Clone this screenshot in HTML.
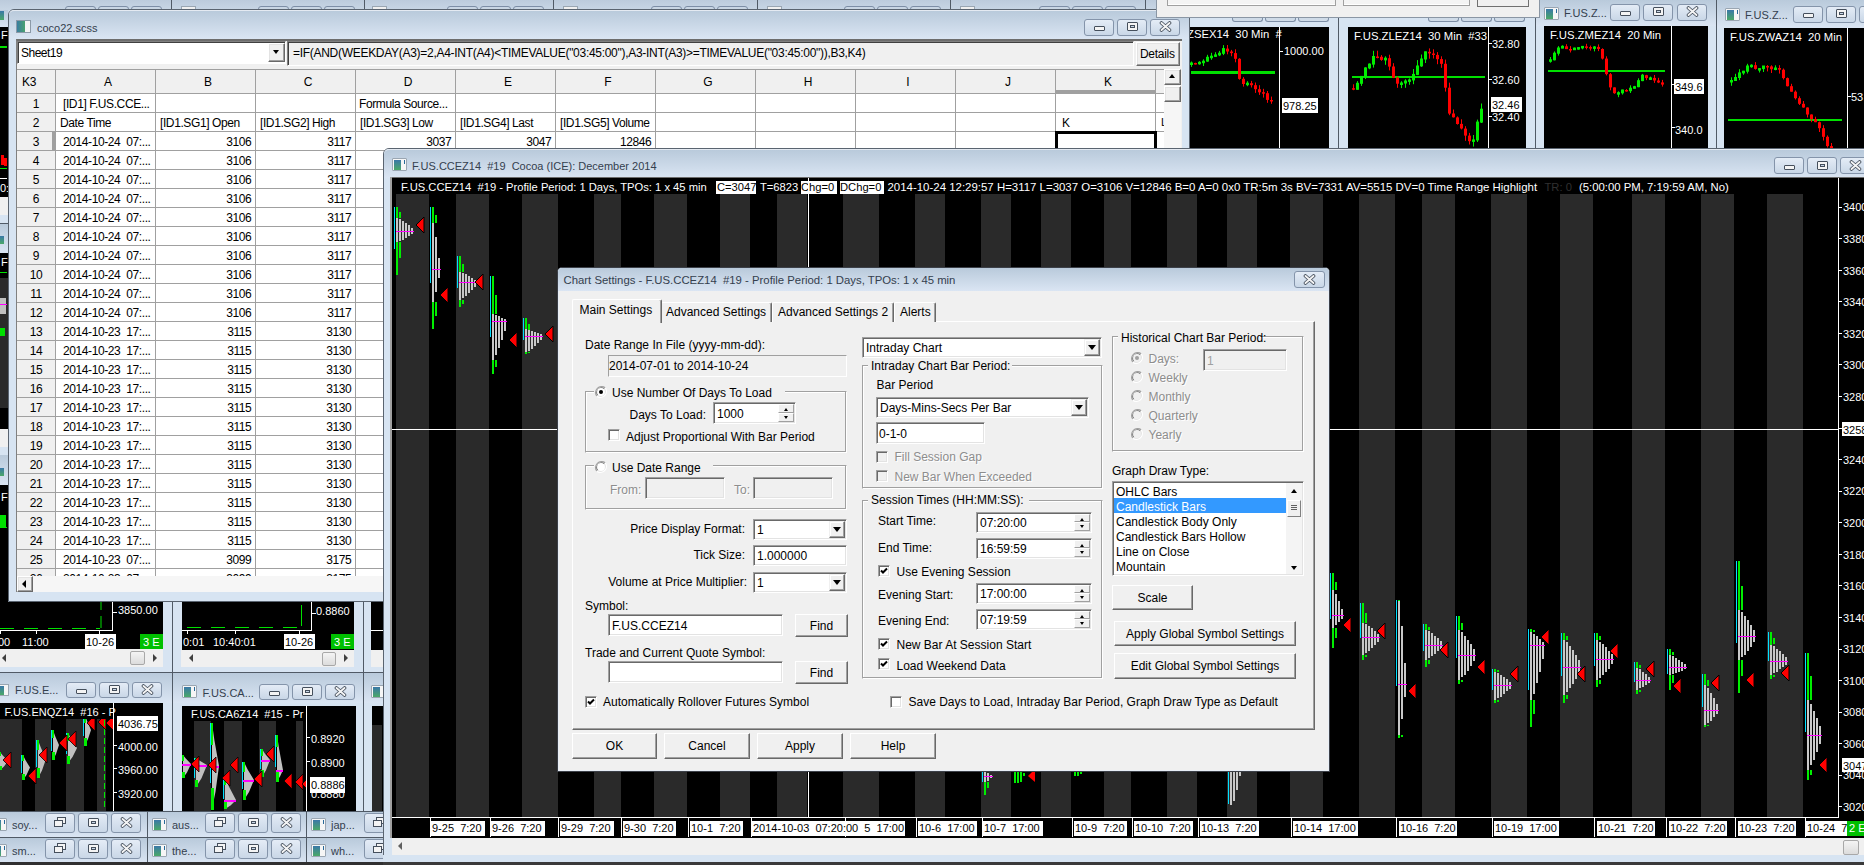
<!DOCTYPE html><html><head><meta charset="utf-8"><style>
*{margin:0;padding:0;box-sizing:border-box}
html,body{width:1864px;height:865px;overflow:hidden;background:#c9d7e6;font-family:"Liberation Sans",sans-serif;font-size:12px;color:#000}
.a{position:absolute}
.t{white-space:pre;line-height:14px}
.tb{background:linear-gradient(#b9cadb,#dae5f3)}
.fr{background:#d7e4f2}
</style></head><body>
<div class="a " style="left:0px;top:0px;width:1864px;height:10px;background:linear-gradient(#bccbdc,#c8d6e5)"></div>
<div class="a " style="left:171px;top:0px;width:1px;height:10px;background:#505a66"></div>
<div class="a " style="left:364px;top:0px;width:1px;height:10px;background:#505a66"></div>
<div class="a " style="left:553px;top:0px;width:1px;height:10px;background:#505a66"></div>
<div class="a " style="left:757px;top:0px;width:1px;height:10px;background:#505a66"></div>
<div class="a " style="left:950px;top:0px;width:1px;height:10px;background:#505a66"></div>
<div class="a " style="left:1145px;top:0px;width:1px;height:10px;background:#505a66"></div>
<div class="a " style="left:181px;top:6px;width:15px;height:4px;background:#f0f0f0;border:1px solid #9aa6b2;border-bottom:none"></div>
<div class="a " style="left:372px;top:6px;width:15px;height:4px;background:#f0f0f0;border:1px solid #9aa6b2;border-bottom:none"></div>
<div class="a " style="left:563px;top:6px;width:15px;height:4px;background:#f0f0f0;border:1px solid #9aa6b2;border-bottom:none"></div>
<div class="a " style="left:767px;top:6px;width:15px;height:4px;background:#f0f0f0;border:1px solid #9aa6b2;border-bottom:none"></div>
<div class="a " style="left:960px;top:6px;width:15px;height:4px;background:#f0f0f0;border:1px solid #9aa6b2;border-bottom:none"></div>
<div class="a " style="left:65px;top:6px;width:31px;height:6px;border:1px solid #7d8ea6;border-radius:3px;background:#c9d6e4"></div>
<div class="a " style="left:98px;top:6px;width:31px;height:6px;border:1px solid #7d8ea6;border-radius:3px;background:#c9d6e4"></div>
<div class="a " style="left:131px;top:6px;width:31px;height:6px;border:1px solid #7d8ea6;border-radius:3px;background:#c9d6e4"></div>
<div class="a " style="left:258px;top:6px;width:31px;height:6px;border:1px solid #7d8ea6;border-radius:3px;background:#c9d6e4"></div>
<div class="a " style="left:291px;top:6px;width:31px;height:6px;border:1px solid #7d8ea6;border-radius:3px;background:#c9d6e4"></div>
<div class="a " style="left:324px;top:6px;width:31px;height:6px;border:1px solid #7d8ea6;border-radius:3px;background:#c9d6e4"></div>
<div class="a " style="left:447px;top:6px;width:31px;height:6px;border:1px solid #7d8ea6;border-radius:3px;background:#c9d6e4"></div>
<div class="a " style="left:480px;top:6px;width:31px;height:6px;border:1px solid #7d8ea6;border-radius:3px;background:#c9d6e4"></div>
<div class="a " style="left:513px;top:6px;width:31px;height:6px;border:1px solid #7d8ea6;border-radius:3px;background:#c9d6e4"></div>
<div class="a " style="left:651px;top:6px;width:31px;height:6px;border:1px solid #7d8ea6;border-radius:3px;background:#c9d6e4"></div>
<div class="a " style="left:684px;top:6px;width:31px;height:6px;border:1px solid #7d8ea6;border-radius:3px;background:#c9d6e4"></div>
<div class="a " style="left:717px;top:6px;width:31px;height:6px;border:1px solid #7d8ea6;border-radius:3px;background:#c9d6e4"></div>
<div class="a " style="left:844px;top:6px;width:31px;height:6px;border:1px solid #7d8ea6;border-radius:3px;background:#c9d6e4"></div>
<div class="a " style="left:877px;top:6px;width:31px;height:6px;border:1px solid #7d8ea6;border-radius:3px;background:#c9d6e4"></div>
<div class="a " style="left:910px;top:6px;width:31px;height:6px;border:1px solid #7d8ea6;border-radius:3px;background:#c9d6e4"></div>
<div class="a " style="left:1039px;top:6px;width:31px;height:6px;border:1px solid #7d8ea6;border-radius:3px;background:#c9d6e4"></div>
<div class="a " style="left:1072px;top:6px;width:31px;height:6px;border:1px solid #7d8ea6;border-radius:3px;background:#c9d6e4"></div>
<div class="a " style="left:1105px;top:6px;width:31px;height:6px;border:1px solid #7d8ea6;border-radius:3px;background:#c9d6e4"></div>
<div class="a " style="left:0px;top:10px;width:8px;height:600px;background:#d7e4f2"></div>
<div class="a " style="left:0px;top:10px;width:8px;height:17px;background:linear-gradient(#b9cadb,#dae5f3)"></div>
<div class="a " style="left:0px;top:11px;width:4px;height:9px;background:linear-gradient(#3a78a8,#4aa868)"></div>
<div class="a " style="left:0px;top:27px;width:8px;height:170px;background:#000"></div>
<div class="a t" style="left:1px;top:28.19px;font-size:11px;color:#fff">F</div>
<div class="a " style="left:0px;top:46px;width:7px;height:2px;background:#00e000"></div>
<div class="a " style="left:1px;top:155px;width:3px;height:10px;background:#f00"></div>
<div class="a " style="left:4px;top:158px;width:3px;height:8px;background:#f00"></div>
<div class="a " style="left:0px;top:168px;width:7px;height:1px;background:#00e000"></div>
<div class="a " style="left:0px;top:178px;width:7px;height:1px;background:#fff"></div>
<div class="a t" style="left:0px;top:181.19px;font-size:11px;color:#fff">0:</div>
<div class="a " style="left:0px;top:197px;width:8px;height:18px;background:#f0f0f0"></div>
<div class="a " style="left:0px;top:215px;width:8px;height:8px;background:#d7e4f2"></div>
<div class="a " style="left:0px;top:223px;width:8px;height:1px;background:#505a66"></div>
<div class="a " style="left:0px;top:224px;width:8px;height:29px;background:linear-gradient(#b9cadb,#dae5f3)"></div>
<div class="a " style="left:0px;top:236px;width:4px;height:8px;background:linear-gradient(#3a78a8,#4aa868)"></div>
<div class="a " style="left:0px;top:253px;width:8px;height:176px;background:#000"></div>
<div class="a t" style="left:1px;top:255.19px;font-size:11px;color:#fff">F</div>
<div class="a " style="left:0px;top:272px;width:7px;height:1px;background:#00e000"></div>
<div class="a " style="left:0px;top:278px;width:8px;height:130px;background:#2a2a2a"></div>
<div class="a " style="left:0px;top:298px;width:6px;height:16px;background:#c0c0c0"></div>
<div class="a " style="left:0px;top:304px;width:7px;height:1px;background:#ff00ff"></div>
<div class="a " style="left:0px;top:328px;width:5px;height:8px;background:#00e000"></div>
<div class="a " style="left:0px;top:429px;width:8px;height:18px;background:#f0f0f0"></div>
<div class="a " style="left:0px;top:447px;width:8px;height:8px;background:#d7e4f2"></div>
<div class="a " style="left:0px;top:455px;width:8px;height:30px;background:linear-gradient(#b9cadb,#dae5f3)"></div>
<div class="a " style="left:0px;top:468px;width:4px;height:8px;background:linear-gradient(#3a78a8,#4aa868)"></div>
<div class="a " style="left:0px;top:485px;width:8px;height:125px;background:#000"></div>
<div class="a t" style="left:1px;top:490.19px;font-size:11px;color:#fff">F</div>
<div class="a " style="left:0px;top:515px;width:6px;height:12px;background:#00e000"></div>
<div class="a " style="left:0px;top:527px;width:7px;height:1px;background:#00e000"></div>
<div class="a " style="left:0px;top:602px;width:383px;height:263px;background:#d7e4f2"></div>
<div class="a " style="left:0px;top:602px;width:163px;height:47px;background:#000"></div>
<div class="a t" style="left:118px;top:603.19px;font-size:11px;color:#fff">3850.00</div>
<div class="a " style="left:112px;top:602px;width:1px;height:29px;background:#fff"></div>
<div class="a " style="left:0px;top:630px;width:113px;height:1px;background:#fff"></div>
<div class="a " style="left:113px;top:612px;width:4px;height:1px;background:#fff"></div>
<div class="a " style="left:0px;top:631px;width:1px;height:3px;background:#fff"></div>
<div class="a " style="left:36px;top:631px;width:1px;height:3px;background:#fff"></div>
<div class="a " style="left:99px;top:631px;width:1px;height:3px;background:#fff"></div>
<svg class="a" style="left:0;top:602px" width="110" height="30"><path d="M0 26.5H100" stroke="#00e000" stroke-width="1" stroke-dasharray="14 10"/><path d="M101 26V0" stroke="#00e000" stroke-width="1" stroke-dasharray="12 6"/></svg>
<div class="a t" style="left:-2px;top:634.69px;font-size:11px;color:#fff">00</div>
<div class="a t" style="left:22px;top:634.69px;font-size:11px;color:#fff">11:00</div>
<div class="a " style="left:85px;top:634px;width:31px;height:15px;background:#fff"></div>
<div class="a t" style="left:86px;top:634.69px;font-size:11px;">10-26</div>
<div class="a " style="left:140px;top:634px;width:23px;height:15px;background:#00c000"></div>
<div class="a t" style="left:143px;top:634.69px;font-size:11px;color:#fff">3 E</div>
<div class="a " style="left:0px;top:649px;width:163px;height:18px;background:#f0f0f0"></div>
<div class="a" style="left:2px;top:654px;width:0;height:0;border-top:4px solid transparent;border-bottom:4px solid transparent;border-right:4px solid #404040"></div>
<div class="a" style="left:153px;top:654px;width:0;height:0;border-top:4px solid transparent;border-bottom:4px solid transparent;border-left:4px solid #404040"></div>
<div class="a " style="left:130px;top:651px;width:15px;height:14px;background:linear-gradient(#f4f4f4,#dcdcdc);border:1px solid #a8a8a8;border-radius:2px"></div>
<div class="a " style="left:172px;top:602px;width:1px;height:263px;background:#505a66"></div>
<div class="a " style="left:182px;top:602px;width:172px;height:48px;background:#000"></div>
<div class="a " style="left:311px;top:602px;width:1px;height:29px;background:#fff"></div>
<div class="a " style="left:182px;top:630px;width:130px;height:1px;background:#fff"></div>
<div class="a " style="left:312px;top:613px;width:4px;height:1px;background:#fff"></div>
<div class="a t" style="left:316px;top:603.89px;font-size:11px;color:#fff">0.8860</div>
<svg class="a" style="left:182px;top:602px" width="130" height="30"><path d="M5 25.5H120" stroke="#00e000" stroke-width="1" stroke-dasharray="14 10"/><path d="M119.5 24V3" stroke="#00e000" stroke-width="1"/></svg>
<div class="a " style="left:187px;top:631px;width:1px;height:3px;background:#fff"></div>
<div class="a " style="left:235px;top:631px;width:1px;height:3px;background:#fff"></div>
<div class="a " style="left:299px;top:631px;width:1px;height:3px;background:#fff"></div>
<div class="a t" style="left:183px;top:634.79px;font-size:11px;color:#fff">0:01</div>
<div class="a t" style="left:213px;top:634.79px;font-size:11px;color:#fff">10:40:01</div>
<div class="a " style="left:284px;top:634px;width:31px;height:15px;background:#fff"></div>
<div class="a t" style="left:285px;top:634.79px;font-size:11px;">10-26</div>
<div class="a " style="left:331px;top:634px;width:23px;height:15px;background:#00c000"></div>
<div class="a t" style="left:334px;top:634.79px;font-size:11px;color:#fff">3 E</div>
<div class="a " style="left:181px;top:650px;width:173px;height:17px;background:#f0f0f0"></div>
<div class="a" style="left:189px;top:654px;width:0;height:0;border-top:4px solid transparent;border-bottom:4px solid transparent;border-right:4px solid #404040"></div>
<div class="a" style="left:344px;top:654px;width:0;height:0;border-top:4px solid transparent;border-bottom:4px solid transparent;border-left:4px solid #404040"></div>
<div class="a " style="left:322px;top:652px;width:14px;height:14px;background:linear-gradient(#f4f4f4,#dcdcdc);border:1px solid #a8a8a8;border-radius:2px"></div>
<div class="a " style="left:363px;top:602px;width:1px;height:263px;background:#505a66"></div>
<div class="a " style="left:371px;top:602px;width:12px;height:48px;background:#000"></div>
<div class="a " style="left:371px;top:630px;width:12px;height:1px;background:#fff"></div>
<div class="a " style="left:371px;top:650px;width:12px;height:17px;background:#f0f0f0"></div>
<div class="a " style="left:0px;top:672px;width:383px;height:1px;background:#505a66"></div>
<div class="a " style="left:0px;top:673px;width:172px;height:30px;background:linear-gradient(#b9cadb,#dae5f3)"></div>
<div class="a " style="left:0px;top:684px;width:9px;height:12px;background:#f6f6f6;border:1px solid #9aa6b2;border-left:none"><div class="a" style="left:0;top:1px;width:4px;height:9px;background:linear-gradient(#3a78a8,#4aa868)"></div></div>
<div class="a t" style="left:15px;top:683.19px;font-size:11px;color:#34404e">F.US.E...</div>
<div class="a " style="left:66px;top:682px;width:30px;height:16px;border:1px solid #8494aa;border-radius:3px;background:linear-gradient(#e4ecf6,#c9d7e7)"></div><div class="a " style="left:99px;top:682px;width:30px;height:16px;border:1px solid #8494aa;border-radius:3px;background:linear-gradient(#e4ecf6,#c9d7e7)"></div><div class="a " style="left:132px;top:682px;width:30px;height:16px;border:1px solid #8494aa;border-radius:3px;background:linear-gradient(#e4ecf6,#c9d7e7)"></div>
<div class="a " style="left:76px;top:689px;width:11px;height:5px;background:#f4f4f4;border:1px solid #454f5c;border-radius:1px"></div><div class="a " style="left:109px;top:685px;width:11px;height:9px;border:1px solid #454f5c;background:#f4f4f4;border-radius:1px"><div class="a" style="left:2px;top:2px;width:5px;height:3px;border:1px solid #454f5c;background:#c9d7e7"></div></div><svg class="a" style="left:141px;top:684px" width="13" height="11"><path d="M2.5 2L10.5 9M10.5 2L2.5 9" stroke="#454f5c" stroke-width="3.6" stroke-linecap="round"/><path d="M2.5 2L10.5 9M10.5 2L2.5 9" stroke="#f4f4f4" stroke-width="1.9" stroke-linecap="round"/></svg>
<div class="a " style="left:0px;top:703px;width:163px;height:108px;background:#000"></div>
<div class="a " style="left:0px;top:719px;width:22px;height:92px;background:#2a2a2a"></div>
<div class="a " style="left:35px;top:719px;width:16px;height:92px;background:#2a2a2a"></div>
<div class="a " style="left:66px;top:719px;width:18px;height:92px;background:#2a2a2a"></div>
<div class="a " style="left:97px;top:719px;width:9px;height:92px;background:#2a2a2a"></div>
<div class="a t" style="left:4.5px;top:704.69px;font-size:11px;color:#fff">F.US.ENQZ14  #16 - P</div>
<div class="a " style="left:113px;top:703px;width:1px;height:108px;background:#fff"></div>
<div class="a " style="left:117px;top:716px;width:41px;height:15px;background:#fff"></div>
<div class="a t" style="left:118px;top:717.19px;font-size:11px;">4036.75</div>
<div class="a " style="left:113px;top:745px;width:4px;height:1px;background:#fff"></div>
<div class="a t" style="left:118px;top:740.19px;font-size:11px;color:#fff">4000.00</div>
<div class="a " style="left:113px;top:768px;width:4px;height:1px;background:#fff"></div>
<div class="a t" style="left:118px;top:763.19px;font-size:11px;color:#fff">3960.00</div>
<div class="a " style="left:113px;top:792px;width:4px;height:1px;background:#fff"></div>
<div class="a t" style="left:118px;top:787.19px;font-size:11px;color:#fff">3920.00</div>
<div class="a " style="left:173px;top:673px;width:190px;height:30px;background:linear-gradient(#b9cadb,#dae5f3)"></div>
<div class="a " style="left:182px;top:685px;width:15px;height:13px;background:#f6f6f6;border:1px solid #9aa6b2;border-radius:1px"><div class="a" style="left:1px;top:1px;width:7px;height:10px;background:linear-gradient(#3a78a8,#4aa868)"></div><div class="a" style="left:11px;top:1px;width:1px;height:4px;background:#2a6a9a"></div></div>
<div class="a t" style="left:202.5px;top:686.19px;font-size:11px;color:#34404e">F.US.CA...</div>
<div class="a " style="left:259px;top:684px;width:30px;height:16px;border:1px solid #8494aa;border-radius:3px;background:linear-gradient(#e4ecf6,#c9d7e7)"></div><div class="a " style="left:292px;top:684px;width:30px;height:16px;border:1px solid #8494aa;border-radius:3px;background:linear-gradient(#e4ecf6,#c9d7e7)"></div><div class="a " style="left:325px;top:684px;width:30px;height:16px;border:1px solid #8494aa;border-radius:3px;background:linear-gradient(#e4ecf6,#c9d7e7)"></div>
<div class="a " style="left:269px;top:691px;width:11px;height:5px;background:#f4f4f4;border:1px solid #454f5c;border-radius:1px"></div><div class="a " style="left:302px;top:687px;width:11px;height:9px;border:1px solid #454f5c;background:#f4f4f4;border-radius:1px"><div class="a" style="left:2px;top:2px;width:5px;height:3px;border:1px solid #454f5c;background:#c9d7e7"></div></div><svg class="a" style="left:334px;top:686px" width="13" height="11"><path d="M2.5 2L10.5 9M10.5 2L2.5 9" stroke="#454f5c" stroke-width="3.6" stroke-linecap="round"/><path d="M2.5 2L10.5 9M10.5 2L2.5 9" stroke="#f4f4f4" stroke-width="1.9" stroke-linecap="round"/></svg>
<div class="a " style="left:182px;top:706px;width:174px;height:105px;background:#000"></div>
<div class="a " style="left:194px;top:721px;width:17px;height:90px;background:#2a2a2a"></div>
<div class="a " style="left:224px;top:721px;width:18px;height:90px;background:#2a2a2a"></div>
<div class="a " style="left:259px;top:721px;width:17px;height:90px;background:#2a2a2a"></div>
<div class="a " style="left:296px;top:721px;width:7px;height:90px;background:#2a2a2a"></div>
<div class="a t" style="left:191px;top:706.79px;font-size:11px;color:#fff">F.US.CA6Z14  #15 - Pr</div>
<div class="a " style="left:182px;top:706px;width:124px;height:16px;overflow:hidden"></div>
<div class="a " style="left:306px;top:706px;width:1px;height:105px;background:#fff"></div>
<div class="a " style="left:306px;top:737px;width:4px;height:1px;background:#fff"></div>
<div class="a t" style="left:311px;top:732.19px;font-size:11px;color:#fff">0.8920</div>
<div class="a " style="left:306px;top:760.6px;width:4px;height:1px;background:#fff"></div>
<div class="a t" style="left:311px;top:755.79px;font-size:11px;color:#fff">0.8900</div>
<div class="a t" style="left:311px;top:787.19px;font-size:11px;color:#fff">0.8880</div>
<div class="a " style="left:310px;top:777px;width:35px;height:16px;background:#fff"></div>
<div class="a t" style="left:311px;top:778.19px;font-size:11px;">0.8886</div>
<div class="a " style="left:364px;top:673px;width:19px;height:30px;background:linear-gradient(#b9cadb,#dae5f3)"></div>
<div class="a " style="left:371px;top:685px;width:15px;height:13px;background:#f6f6f6;border:1px solid #9aa6b2;border-radius:1px"><div class="a" style="left:1px;top:1px;width:7px;height:10px;background:linear-gradient(#3a78a8,#4aa868)"></div><div class="a" style="left:11px;top:1px;width:1px;height:4px;background:#2a6a9a"></div></div>
<div class="a " style="left:372px;top:706px;width:11px;height:105px;background:#000"></div>
<div class="a " style="left:372px;top:725px;width:10px;height:86px;background:#2a2a2a"></div>
<div class="a " style="left:-12px;top:811px;width:160px;height:26px;background:linear-gradient(#b9cadb,#dae5f3);border-top:1px solid #505a66;border-right:1px solid #505a66"></div><div class="a " style="left:-8px;top:818px;width:15px;height:13px;background:#f6f6f6;border:1px solid #9aa6b2;border-radius:1px"><div class="a" style="left:1px;top:1px;width:7px;height:10px;background:linear-gradient(#3a78a8,#4aa868)"></div><div class="a" style="left:11px;top:1px;width:1px;height:4px;background:#2a6a9a"></div></div><div class="a t" style="left:12px;top:817.69px;font-size:11px;color:#34404e">soy...</div><div class="a " style="left:45px;top:813px;width:30px;height:20px;border:1px solid #8494aa;border-radius:3px;background:linear-gradient(#e4ecf6,#c9d7e7)"></div><div class="a " style="left:78px;top:813px;width:30px;height:20px;border:1px solid #8494aa;border-radius:3px;background:linear-gradient(#e4ecf6,#c9d7e7)"></div><div class="a " style="left:111px;top:813px;width:30px;height:20px;border:1px solid #8494aa;border-radius:3px;background:linear-gradient(#e4ecf6,#c9d7e7)"></div><div class="a " style="left:54px;top:820px;width:9px;height:7px;border:1px solid #454f5c;background:#f4f4f4"></div><div class="a " style="left:57px;top:817px;width:9px;height:7px;border:1px solid #454f5c;background:#f4f4f4"></div><div class="a " style="left:54px;top:820px;width:9px;height:7px;border:1px solid #454f5c;background:#f4f4f4"></div><div class="a " style="left:88px;top:818px;width:11px;height:9px;border:1px solid #454f5c;background:#f4f4f4;border-radius:1px"><div class="a" style="left:2px;top:2px;width:5px;height:3px;border:1px solid #454f5c;background:#c9d7e7"></div></div><svg class="a" style="left:120px;top:817px" width="13" height="11"><path d="M2.5 2L10.5 9M10.5 2L2.5 9" stroke="#454f5c" stroke-width="3.6" stroke-linecap="round"/><path d="M2.5 2L10.5 9M10.5 2L2.5 9" stroke="#f4f4f4" stroke-width="1.9" stroke-linecap="round"/></svg>
<div class="a " style="left:148px;top:811px;width:159px;height:26px;background:linear-gradient(#b9cadb,#dae5f3);border-top:1px solid #505a66;border-right:1px solid #505a66"></div><div class="a " style="left:152px;top:818px;width:15px;height:13px;background:#f6f6f6;border:1px solid #9aa6b2;border-radius:1px"><div class="a" style="left:1px;top:1px;width:7px;height:10px;background:linear-gradient(#3a78a8,#4aa868)"></div><div class="a" style="left:11px;top:1px;width:1px;height:4px;background:#2a6a9a"></div></div><div class="a t" style="left:172px;top:817.69px;font-size:11px;color:#34404e">aus...</div><div class="a " style="left:205px;top:813px;width:30px;height:20px;border:1px solid #8494aa;border-radius:3px;background:linear-gradient(#e4ecf6,#c9d7e7)"></div><div class="a " style="left:238px;top:813px;width:30px;height:20px;border:1px solid #8494aa;border-radius:3px;background:linear-gradient(#e4ecf6,#c9d7e7)"></div><div class="a " style="left:271px;top:813px;width:30px;height:20px;border:1px solid #8494aa;border-radius:3px;background:linear-gradient(#e4ecf6,#c9d7e7)"></div><div class="a " style="left:214px;top:820px;width:9px;height:7px;border:1px solid #454f5c;background:#f4f4f4"></div><div class="a " style="left:217px;top:817px;width:9px;height:7px;border:1px solid #454f5c;background:#f4f4f4"></div><div class="a " style="left:214px;top:820px;width:9px;height:7px;border:1px solid #454f5c;background:#f4f4f4"></div><div class="a " style="left:248px;top:818px;width:11px;height:9px;border:1px solid #454f5c;background:#f4f4f4;border-radius:1px"><div class="a" style="left:2px;top:2px;width:5px;height:3px;border:1px solid #454f5c;background:#c9d7e7"></div></div><svg class="a" style="left:280px;top:817px" width="13" height="11"><path d="M2.5 2L10.5 9M10.5 2L2.5 9" stroke="#454f5c" stroke-width="3.6" stroke-linecap="round"/><path d="M2.5 2L10.5 9M10.5 2L2.5 9" stroke="#f4f4f4" stroke-width="1.9" stroke-linecap="round"/></svg>
<div class="a " style="left:307px;top:811px;width:160px;height:26px;background:linear-gradient(#b9cadb,#dae5f3);border-top:1px solid #505a66;border-right:1px solid #505a66"></div><div class="a " style="left:311px;top:818px;width:15px;height:13px;background:#f6f6f6;border:1px solid #9aa6b2;border-radius:1px"><div class="a" style="left:1px;top:1px;width:7px;height:10px;background:linear-gradient(#3a78a8,#4aa868)"></div><div class="a" style="left:11px;top:1px;width:1px;height:4px;background:#2a6a9a"></div></div><div class="a t" style="left:331px;top:817.69px;font-size:11px;color:#34404e">jap...</div><div class="a " style="left:364px;top:813px;width:30px;height:20px;border:1px solid #8494aa;border-radius:3px;background:linear-gradient(#e4ecf6,#c9d7e7)"></div><div class="a " style="left:397px;top:813px;width:30px;height:20px;border:1px solid #8494aa;border-radius:3px;background:linear-gradient(#e4ecf6,#c9d7e7)"></div><div class="a " style="left:430px;top:813px;width:30px;height:20px;border:1px solid #8494aa;border-radius:3px;background:linear-gradient(#e4ecf6,#c9d7e7)"></div><div class="a " style="left:373px;top:820px;width:9px;height:7px;border:1px solid #454f5c;background:#f4f4f4"></div><div class="a " style="left:376px;top:817px;width:9px;height:7px;border:1px solid #454f5c;background:#f4f4f4"></div><div class="a " style="left:373px;top:820px;width:9px;height:7px;border:1px solid #454f5c;background:#f4f4f4"></div><div class="a " style="left:407px;top:818px;width:11px;height:9px;border:1px solid #454f5c;background:#f4f4f4;border-radius:1px"><div class="a" style="left:2px;top:2px;width:5px;height:3px;border:1px solid #454f5c;background:#c9d7e7"></div></div><svg class="a" style="left:439px;top:817px" width="13" height="11"><path d="M2.5 2L10.5 9M10.5 2L2.5 9" stroke="#454f5c" stroke-width="3.6" stroke-linecap="round"/><path d="M2.5 2L10.5 9M10.5 2L2.5 9" stroke="#f4f4f4" stroke-width="1.9" stroke-linecap="round"/></svg>
<div class="a " style="left:-12px;top:837px;width:160px;height:26px;background:linear-gradient(#b9cadb,#dae5f3);border-top:1px solid #505a66;border-right:1px solid #505a66"></div><div class="a " style="left:-8px;top:844px;width:15px;height:13px;background:#f6f6f6;border:1px solid #9aa6b2;border-radius:1px"><div class="a" style="left:1px;top:1px;width:7px;height:10px;background:linear-gradient(#3a78a8,#4aa868)"></div><div class="a" style="left:11px;top:1px;width:1px;height:4px;background:#2a6a9a"></div></div><div class="a t" style="left:12px;top:843.69px;font-size:11px;color:#34404e">sm...</div><div class="a " style="left:45px;top:839px;width:30px;height:20px;border:1px solid #8494aa;border-radius:3px;background:linear-gradient(#e4ecf6,#c9d7e7)"></div><div class="a " style="left:78px;top:839px;width:30px;height:20px;border:1px solid #8494aa;border-radius:3px;background:linear-gradient(#e4ecf6,#c9d7e7)"></div><div class="a " style="left:111px;top:839px;width:30px;height:20px;border:1px solid #8494aa;border-radius:3px;background:linear-gradient(#e4ecf6,#c9d7e7)"></div><div class="a " style="left:54px;top:846px;width:9px;height:7px;border:1px solid #454f5c;background:#f4f4f4"></div><div class="a " style="left:57px;top:843px;width:9px;height:7px;border:1px solid #454f5c;background:#f4f4f4"></div><div class="a " style="left:54px;top:846px;width:9px;height:7px;border:1px solid #454f5c;background:#f4f4f4"></div><div class="a " style="left:88px;top:844px;width:11px;height:9px;border:1px solid #454f5c;background:#f4f4f4;border-radius:1px"><div class="a" style="left:2px;top:2px;width:5px;height:3px;border:1px solid #454f5c;background:#c9d7e7"></div></div><svg class="a" style="left:120px;top:843px" width="13" height="11"><path d="M2.5 2L10.5 9M10.5 2L2.5 9" stroke="#454f5c" stroke-width="3.6" stroke-linecap="round"/><path d="M2.5 2L10.5 9M10.5 2L2.5 9" stroke="#f4f4f4" stroke-width="1.9" stroke-linecap="round"/></svg>
<div class="a " style="left:148px;top:837px;width:159px;height:26px;background:linear-gradient(#b9cadb,#dae5f3);border-top:1px solid #505a66;border-right:1px solid #505a66"></div><div class="a " style="left:152px;top:844px;width:15px;height:13px;background:#f6f6f6;border:1px solid #9aa6b2;border-radius:1px"><div class="a" style="left:1px;top:1px;width:7px;height:10px;background:linear-gradient(#3a78a8,#4aa868)"></div><div class="a" style="left:11px;top:1px;width:1px;height:4px;background:#2a6a9a"></div></div><div class="a t" style="left:172px;top:843.69px;font-size:11px;color:#34404e">the...</div><div class="a " style="left:205px;top:839px;width:30px;height:20px;border:1px solid #8494aa;border-radius:3px;background:linear-gradient(#e4ecf6,#c9d7e7)"></div><div class="a " style="left:238px;top:839px;width:30px;height:20px;border:1px solid #8494aa;border-radius:3px;background:linear-gradient(#e4ecf6,#c9d7e7)"></div><div class="a " style="left:271px;top:839px;width:30px;height:20px;border:1px solid #8494aa;border-radius:3px;background:linear-gradient(#e4ecf6,#c9d7e7)"></div><div class="a " style="left:214px;top:846px;width:9px;height:7px;border:1px solid #454f5c;background:#f4f4f4"></div><div class="a " style="left:217px;top:843px;width:9px;height:7px;border:1px solid #454f5c;background:#f4f4f4"></div><div class="a " style="left:214px;top:846px;width:9px;height:7px;border:1px solid #454f5c;background:#f4f4f4"></div><div class="a " style="left:248px;top:844px;width:11px;height:9px;border:1px solid #454f5c;background:#f4f4f4;border-radius:1px"><div class="a" style="left:2px;top:2px;width:5px;height:3px;border:1px solid #454f5c;background:#c9d7e7"></div></div><svg class="a" style="left:280px;top:843px" width="13" height="11"><path d="M2.5 2L10.5 9M10.5 2L2.5 9" stroke="#454f5c" stroke-width="3.6" stroke-linecap="round"/><path d="M2.5 2L10.5 9M10.5 2L2.5 9" stroke="#f4f4f4" stroke-width="1.9" stroke-linecap="round"/></svg>
<div class="a " style="left:307px;top:837px;width:160px;height:26px;background:linear-gradient(#b9cadb,#dae5f3);border-top:1px solid #505a66;border-right:1px solid #505a66"></div><div class="a " style="left:311px;top:844px;width:15px;height:13px;background:#f6f6f6;border:1px solid #9aa6b2;border-radius:1px"><div class="a" style="left:1px;top:1px;width:7px;height:10px;background:linear-gradient(#3a78a8,#4aa868)"></div><div class="a" style="left:11px;top:1px;width:1px;height:4px;background:#2a6a9a"></div></div><div class="a t" style="left:331px;top:843.69px;font-size:11px;color:#34404e">wh...</div><div class="a " style="left:364px;top:839px;width:30px;height:20px;border:1px solid #8494aa;border-radius:3px;background:linear-gradient(#e4ecf6,#c9d7e7)"></div><div class="a " style="left:397px;top:839px;width:30px;height:20px;border:1px solid #8494aa;border-radius:3px;background:linear-gradient(#e4ecf6,#c9d7e7)"></div><div class="a " style="left:430px;top:839px;width:30px;height:20px;border:1px solid #8494aa;border-radius:3px;background:linear-gradient(#e4ecf6,#c9d7e7)"></div><div class="a " style="left:373px;top:846px;width:9px;height:7px;border:1px solid #454f5c;background:#f4f4f4"></div><div class="a " style="left:376px;top:843px;width:9px;height:7px;border:1px solid #454f5c;background:#f4f4f4"></div><div class="a " style="left:373px;top:846px;width:9px;height:7px;border:1px solid #454f5c;background:#f4f4f4"></div><div class="a " style="left:407px;top:844px;width:11px;height:9px;border:1px solid #454f5c;background:#f4f4f4;border-radius:1px"><div class="a" style="left:2px;top:2px;width:5px;height:3px;border:1px solid #454f5c;background:#c9d7e7"></div></div><svg class="a" style="left:439px;top:843px" width="13" height="11"><path d="M2.5 2L10.5 9M10.5 2L2.5 9" stroke="#454f5c" stroke-width="3.6" stroke-linecap="round"/><path d="M2.5 2L10.5 9M10.5 2L2.5 9" stroke="#f4f4f4" stroke-width="1.9" stroke-linecap="round"/></svg>
<div class="a " style="left:0px;top:862px;width:383px;height:3px;background:#303030"></div>
<div class="a " style="left:1190px;top:0px;width:674px;height:148px;background:#d7e4f2"></div>
<div class="a " style="left:1190px;top:27px;width:139px;height:121px;background:#000"></div>
<div class="a t" style="left:1187px;top:27.08px;font-size:11.3px;color:#fff">ZSEX14  30 Min  #</div>
<div class="a " style="left:1279px;top:27px;width:1px;height:121px;background:#fff"></div>
<div class="a " style="left:1279px;top:51px;width:4px;height:1px;background:#fff"></div>
<div class="a t" style="left:1284px;top:44.49px;font-size:11px;color:#fff">1000.00</div>
<div class="a " style="left:1282px;top:98px;width:36px;height:15px;background:#fff"></div>
<div class="a t" style="left:1283px;top:98.69px;font-size:11px;">978.25</div>
<div class="a " style="left:1191px;top:71px;width:84px;height:3px;background:#00e000"></div>
<svg class="a" style="left:0;top:0" width="1864" height="150"><path d="M1191.5 61.5V66.9" stroke="#00ee00" stroke-width="1"/><rect x="1190.5" y="63.0" width="2" height="1.5" fill="none" stroke="#00ee00" stroke-width="1"/><path d="M1195.5 62.7V64.5" stroke="#ff0000" stroke-width="1"/><rect x="1194" y="63.0" width="3" height="1.5" fill="#ff0000"/><path d="M1199.5 61.2V64.7" stroke="#00ee00" stroke-width="1"/><rect x="1198.5" y="62.3" width="2" height="1.5" fill="none" stroke="#00ee00" stroke-width="1"/><path d="M1203.5 59.3V66.0" stroke="#00ee00" stroke-width="1"/><rect x="1202.5" y="61.2" width="2" height="1.5" fill="none" stroke="#00ee00" stroke-width="1"/><path d="M1207.5 54.8V61.8" stroke="#00ee00" stroke-width="1"/><rect x="1206.5" y="57.3" width="2" height="3.8" fill="none" stroke="#00ee00" stroke-width="1"/><path d="M1211.5 52.8V59.8" stroke="#00ee00" stroke-width="1"/><rect x="1210.5" y="56.2" width="2" height="1.5" fill="none" stroke="#00ee00" stroke-width="1"/><path d="M1215.5 52.2V56.7" stroke="#00ee00" stroke-width="1"/><rect x="1214.5" y="54.9" width="2" height="1.5" fill="none" stroke="#00ee00" stroke-width="1"/><path d="M1219.5 50.9V56.1" stroke="#00ee00" stroke-width="1"/><rect x="1218.5" y="53.2" width="2" height="1.7" fill="none" stroke="#00ee00" stroke-width="1"/><path d="M1223.5 45.1V55.1" stroke="#00ee00" stroke-width="1"/><rect x="1222.5" y="48.6" width="2" height="4.7" fill="none" stroke="#00ee00" stroke-width="1"/><path d="M1227.5 45.0V54.3" stroke="#ff0000" stroke-width="1"/><rect x="1226" y="48.6" width="3" height="2.9" fill="#ff0000"/><path d="M1231.5 49.9V56.3" stroke="#ff0000" stroke-width="1"/><rect x="1230" y="51.5" width="3" height="1.6" fill="#ff0000"/><path d="M1235.5 49.3V62.3" stroke="#ff0000" stroke-width="1"/><rect x="1234" y="53.1" width="3" height="5.7" fill="#ff0000"/><path d="M1239.5 58.2V79.7" stroke="#ff0000" stroke-width="1"/><rect x="1238" y="58.8" width="3" height="20.1" fill="#ff0000"/><path d="M1243.5 77.1V86.6" stroke="#ff0000" stroke-width="1"/><rect x="1242" y="78.8" width="3" height="5.2" fill="#ff0000"/><path d="M1247.5 81.2V86.2" stroke="#00ee00" stroke-width="1"/><rect x="1246.5" y="83.2" width="2" height="1.5" fill="none" stroke="#00ee00" stroke-width="1"/><path d="M1251.5 80.9V87.5" stroke="#ff0000" stroke-width="1"/><rect x="1250" y="83.2" width="3" height="2.0" fill="#ff0000"/><path d="M1255.5 82.5V92.9" stroke="#ff0000" stroke-width="1"/><rect x="1254" y="85.2" width="3" height="4.0" fill="#ff0000"/><path d="M1259.5 85.2V94.9" stroke="#ff0000" stroke-width="1"/><rect x="1258" y="89.2" width="3" height="3.1" fill="#ff0000"/><path d="M1263.5 88.8V97.6" stroke="#ff0000" stroke-width="1"/><rect x="1262" y="92.2" width="3" height="1.5" fill="#ff0000"/><path d="M1267.5 91.0V102.8" stroke="#ff0000" stroke-width="1"/><rect x="1266" y="93.2" width="3" height="6.7" fill="#ff0000"/><path d="M1271.5 96.6V103.8" stroke="#ff0000" stroke-width="1"/><rect x="1270" y="100.0" width="3" height="1.5" fill="#ff0000"/></svg>
<div class="a " style="left:1338px;top:0px;width:1px;height:148px;background:#505a66"></div>
<div class="a " style="left:1348px;top:27px;width:178px;height:121px;background:#000"></div>
<div class="a t" style="left:1354px;top:29.08px;font-size:11.3px;color:#fff">F.US.ZLEZ14  30 Min  #33</div>
<div class="a " style="left:1488px;top:27px;width:1px;height:121px;background:#fff"></div>
<div class="a " style="left:1488px;top:43px;width:4px;height:1px;background:#fff"></div>
<div class="a t" style="left:1492px;top:37.19px;font-size:11px;color:#fff">32.80</div>
<div class="a " style="left:1488px;top:79px;width:4px;height:1px;background:#fff"></div>
<div class="a t" style="left:1492px;top:73.19px;font-size:11px;color:#fff">32.60</div>
<div class="a " style="left:1488px;top:116px;width:4px;height:1px;background:#fff"></div>
<div class="a t" style="left:1492px;top:110.19px;font-size:11px;color:#fff">32.40</div>
<div class="a " style="left:1491px;top:97px;width:31px;height:15px;background:#fff"></div>
<div class="a t" style="left:1492px;top:98.19px;font-size:11px;">32.46</div>
<div class="a " style="left:1352px;top:76px;width:133px;height:2px;background:#00e000"></div>
<svg class="a" style="left:0;top:0" width="1864" height="150"><path d="M1353.5 84.3V90.2" stroke="#ff0000" stroke-width="1"/><rect x="1352" y="88.2" width="3" height="1.5" fill="#ff0000"/><path d="M1357.5 81.1V89.6" stroke="#00ee00" stroke-width="1"/><rect x="1356.5" y="83.3" width="2" height="6.0" fill="none" stroke="#00ee00" stroke-width="1"/><path d="M1361.5 76.2V85.9" stroke="#00ee00" stroke-width="1"/><rect x="1360.5" y="76.4" width="2" height="6.9" fill="none" stroke="#00ee00" stroke-width="1"/><path d="M1365.5 67.3V79.0" stroke="#00ee00" stroke-width="1"/><rect x="1364.5" y="67.9" width="2" height="8.6" fill="none" stroke="#00ee00" stroke-width="1"/><path d="M1369.5 63.4V69.2" stroke="#00ee00" stroke-width="1"/><rect x="1368.5" y="64.1" width="2" height="3.8" fill="none" stroke="#00ee00" stroke-width="1"/><path d="M1373.5 50.8V67.6" stroke="#00ee00" stroke-width="1"/><rect x="1372.5" y="56.5" width="2" height="7.6" fill="none" stroke="#00ee00" stroke-width="1"/><path d="M1377.5 50.7V58.3" stroke="#ff0000" stroke-width="1"/><rect x="1376" y="56.5" width="3" height="1.5" fill="#ff0000"/><path d="M1381.5 55.1V60.8" stroke="#ff0000" stroke-width="1"/><rect x="1380" y="56.8" width="3" height="3.1" fill="#ff0000"/><path d="M1385.5 56.3V64.8" stroke="#00ee00" stroke-width="1"/><rect x="1384.5" y="58.2" width="2" height="1.7" fill="none" stroke="#00ee00" stroke-width="1"/><path d="M1389.5 54.7V70.4" stroke="#ff0000" stroke-width="1"/><rect x="1388" y="58.2" width="3" height="8.4" fill="#ff0000"/><path d="M1393.5 63.2V78.1" stroke="#ff0000" stroke-width="1"/><rect x="1392" y="66.5" width="3" height="11.2" fill="#ff0000"/><path d="M1397.5 76.5V87.8" stroke="#ff0000" stroke-width="1"/><rect x="1396" y="77.7" width="3" height="6.0" fill="#ff0000"/><path d="M1401.5 81.2V88.1" stroke="#00ee00" stroke-width="1"/><rect x="1400.5" y="83.0" width="2" height="1.5" fill="none" stroke="#00ee00" stroke-width="1"/><path d="M1405.5 79.2V87.8" stroke="#00ee00" stroke-width="1"/><rect x="1404.5" y="81.0" width="2" height="2.0" fill="none" stroke="#00ee00" stroke-width="1"/><path d="M1409.5 78.4V84.8" stroke="#00ee00" stroke-width="1"/><rect x="1408.5" y="79.9" width="2" height="1.5" fill="none" stroke="#00ee00" stroke-width="1"/><path d="M1413.5 69.1V84.2" stroke="#00ee00" stroke-width="1"/><rect x="1412.5" y="74.4" width="2" height="5.5" fill="none" stroke="#00ee00" stroke-width="1"/><path d="M1417.5 60.1V75.1" stroke="#00ee00" stroke-width="1"/><rect x="1416.5" y="66.0" width="2" height="8.4" fill="none" stroke="#00ee00" stroke-width="1"/><path d="M1421.5 54.5V66.9" stroke="#00ee00" stroke-width="1"/><rect x="1420.5" y="59.0" width="2" height="6.9" fill="none" stroke="#00ee00" stroke-width="1"/><path d="M1425.5 51.6V63.0" stroke="#00ee00" stroke-width="1"/><rect x="1424.5" y="51.8" width="2" height="7.2" fill="none" stroke="#00ee00" stroke-width="1"/><path d="M1429.5 48.4V58.7" stroke="#ff0000" stroke-width="1"/><rect x="1428" y="51.8" width="3" height="1.6" fill="#ff0000"/><path d="M1433.5 49.3V58.5" stroke="#ff0000" stroke-width="1"/><rect x="1432" y="53.5" width="3" height="1.5" fill="#ff0000"/><path d="M1437.5 52.1V64.2" stroke="#ff0000" stroke-width="1"/><rect x="1436" y="54.9" width="3" height="4.3" fill="#ff0000"/><path d="M1441.5 56.3V67.8" stroke="#ff0000" stroke-width="1"/><rect x="1440" y="59.1" width="3" height="4.7" fill="#ff0000"/><path d="M1445.5 59.6V91.6" stroke="#ff0000" stroke-width="1"/><rect x="1444" y="63.8" width="3" height="23.9" fill="#ff0000"/><path d="M1449.5 82.7V115.2" stroke="#ff0000" stroke-width="1"/><rect x="1448" y="87.7" width="3" height="25.9" fill="#ff0000"/><path d="M1453.5 109.5V117.5" stroke="#ff0000" stroke-width="1"/><rect x="1452" y="113.5" width="3" height="3.8" fill="#ff0000"/><path d="M1457.5 116.4V124.6" stroke="#ff0000" stroke-width="1"/><rect x="1456" y="117.4" width="3" height="6.6" fill="#ff0000"/><path d="M1461.5 119.3V129.4" stroke="#ff0000" stroke-width="1"/><rect x="1460" y="123.9" width="3" height="4.6" fill="#ff0000"/><path d="M1465.5 126.2V140.8" stroke="#ff0000" stroke-width="1"/><rect x="1464" y="128.6" width="3" height="7.0" fill="#ff0000"/><path d="M1469.5 132.9V144.5" stroke="#ff0000" stroke-width="1"/><rect x="1468" y="135.6" width="3" height="5.6" fill="#ff0000"/><path d="M1473.5 135.0V146.6" stroke="#00ee00" stroke-width="1"/><rect x="1472.5" y="139.9" width="2" height="1.5" fill="none" stroke="#00ee00" stroke-width="1"/><path d="M1477.5 119.6V142.0" stroke="#00ee00" stroke-width="1"/><rect x="1476.5" y="122.1" width="2" height="17.8" fill="none" stroke="#00ee00" stroke-width="1"/><path d="M1481.5 103.5V123.0" stroke="#00ee00" stroke-width="1"/><rect x="1480.5" y="109.2" width="2" height="12.9" fill="none" stroke="#00ee00" stroke-width="1"/></svg>
<div class="a " style="left:1535px;top:0px;width:1px;height:148px;background:#505a66"></div>
<div class="a " style="left:1536px;top:0px;width:180px;height:26px;background:linear-gradient(#b9cadb,#dae5f3)"></div>
<div class="a " style="left:1544px;top:7px;width:15px;height:13px;background:#f6f6f6;border:1px solid #9aa6b2;border-radius:1px"><div class="a" style="left:1px;top:1px;width:7px;height:10px;background:linear-gradient(#3a78a8,#4aa868)"></div><div class="a" style="left:11px;top:1px;width:1px;height:4px;background:#2a6a9a"></div></div>
<div class="a t" style="left:1564px;top:6.19px;font-size:11px;color:#34404e">F.US.Z...</div>
<div class="a " style="left:1610px;top:4px;width:30px;height:17px;border:1px solid #8494aa;border-radius:3px;background:linear-gradient(#e4ecf6,#c9d7e7)"></div><div class="a " style="left:1643px;top:4px;width:30px;height:17px;border:1px solid #8494aa;border-radius:3px;background:linear-gradient(#e4ecf6,#c9d7e7)"></div><div class="a " style="left:1677px;top:4px;width:30px;height:17px;border:1px solid #8494aa;border-radius:3px;background:linear-gradient(#e4ecf6,#c9d7e7)"></div>
<div class="a " style="left:1620px;top:11px;width:11px;height:5px;background:#f4f4f4;border:1px solid #454f5c;border-radius:1px"></div><div class="a " style="left:1653px;top:7px;width:11px;height:9px;border:1px solid #454f5c;background:#f4f4f4;border-radius:1px"><div class="a" style="left:2px;top:2px;width:5px;height:3px;border:1px solid #454f5c;background:#c9d7e7"></div></div><svg class="a" style="left:1686px;top:6px" width="13" height="11"><path d="M2.5 2L10.5 9M10.5 2L2.5 9" stroke="#454f5c" stroke-width="3.6" stroke-linecap="round"/><path d="M2.5 2L10.5 9M10.5 2L2.5 9" stroke="#f4f4f4" stroke-width="1.9" stroke-linecap="round"/></svg>
<div class="a " style="left:1544px;top:26px;width:164px;height:122px;background:#000"></div>
<div class="a t" style="left:1550px;top:28.08px;font-size:11.3px;color:#fff">F.US.ZMEZ14  20 Min</div>
<div class="a " style="left:1671px;top:26px;width:1px;height:122px;background:#fff"></div>
<div class="a " style="left:1671px;top:84px;width:4px;height:1px;background:#fff"></div>
<div class="a " style="left:1671px;top:127px;width:4px;height:1px;background:#fff"></div>
<div class="a " style="left:1674px;top:79px;width:30px;height:15px;background:#fff"></div>
<div class="a t" style="left:1675px;top:80.19px;font-size:11px;">349.6</div>
<div class="a t" style="left:1675px;top:123.19px;font-size:11px;color:#fff">340.0</div>
<div class="a " style="left:1548px;top:70px;width:117px;height:2px;background:#00e000"></div>
<svg class="a" style="left:0;top:0" width="1864" height="150"><path d="M1550.5 57.0V62.7" stroke="#00ee00" stroke-width="1"/><rect x="1549.5" y="59.8" width="2" height="1.5" fill="none" stroke="#00ee00" stroke-width="1"/><path d="M1554.5 51.4V60.4" stroke="#00ee00" stroke-width="1"/><rect x="1553.5" y="53.2" width="2" height="6.6" fill="none" stroke="#00ee00" stroke-width="1"/><path d="M1558.5 46.1V55.6" stroke="#00ee00" stroke-width="1"/><rect x="1557.5" y="48.0" width="2" height="5.2" fill="none" stroke="#00ee00" stroke-width="1"/><path d="M1562.5 45.3V48.3" stroke="#00ee00" stroke-width="1"/><rect x="1561.5" y="46.3" width="2" height="1.8" fill="none" stroke="#00ee00" stroke-width="1"/><path d="M1566.5 44.2V49.1" stroke="#ff0000" stroke-width="1"/><rect x="1565" y="46.3" width="3" height="2.8" fill="#ff0000"/><path d="M1570.5 46.1V52.5" stroke="#ff0000" stroke-width="1"/><rect x="1569" y="49.0" width="3" height="1.5" fill="#ff0000"/><path d="M1574.5 47.6V49.7" stroke="#00ee00" stroke-width="1"/><rect x="1573.5" y="48.1" width="2" height="1.6" fill="none" stroke="#00ee00" stroke-width="1"/><path d="M1578.5 47.4V49.7" stroke="#00ee00" stroke-width="1"/><rect x="1577.5" y="47.6" width="2" height="1.5" fill="none" stroke="#00ee00" stroke-width="1"/><path d="M1582.5 46.3V49.3" stroke="#00ee00" stroke-width="1"/><rect x="1581.5" y="46.4" width="2" height="1.5" fill="none" stroke="#00ee00" stroke-width="1"/><path d="M1586.5 43.8V49.4" stroke="#ff0000" stroke-width="1"/><rect x="1585" y="46.4" width="3" height="1.5" fill="#ff0000"/><path d="M1590.5 45.6V50.6" stroke="#ff0000" stroke-width="1"/><rect x="1589" y="47.1" width="3" height="1.5" fill="#ff0000"/><path d="M1594.5 46.1V51.4" stroke="#00ee00" stroke-width="1"/><rect x="1593.5" y="46.9" width="2" height="1.5" fill="none" stroke="#00ee00" stroke-width="1"/><path d="M1598.5 44.4V51.1" stroke="#ff0000" stroke-width="1"/><rect x="1597" y="46.9" width="3" height="2.1" fill="#ff0000"/><path d="M1602.5 48.3V59.5" stroke="#ff0000" stroke-width="1"/><rect x="1601" y="49.0" width="3" height="9.6" fill="#ff0000"/><path d="M1606.5 56.3V75.4" stroke="#ff0000" stroke-width="1"/><rect x="1605" y="58.6" width="3" height="15.5" fill="#ff0000"/><path d="M1610.5 73.0V90.3" stroke="#ff0000" stroke-width="1"/><rect x="1609" y="74.2" width="3" height="13.2" fill="#ff0000"/><path d="M1614.5 87.4V93.8" stroke="#ff0000" stroke-width="1"/><rect x="1613" y="87.4" width="3" height="5.8" fill="#ff0000"/><path d="M1618.5 91.3V97.2" stroke="#00ee00" stroke-width="1"/><rect x="1617.5" y="92.7" width="2" height="1.5" fill="none" stroke="#00ee00" stroke-width="1"/><path d="M1622.5 89.7V94.6" stroke="#00ee00" stroke-width="1"/><rect x="1621.5" y="90.0" width="2" height="2.8" fill="none" stroke="#00ee00" stroke-width="1"/><path d="M1626.5 89.1V91.7" stroke="#ff0000" stroke-width="1"/><rect x="1625" y="90.0" width="3" height="1.5" fill="#ff0000"/><path d="M1630.5 85.3V93.0" stroke="#00ee00" stroke-width="1"/><rect x="1629.5" y="88.2" width="2" height="2.5" fill="none" stroke="#00ee00" stroke-width="1"/><path d="M1634.5 85.9V88.5" stroke="#00ee00" stroke-width="1"/><rect x="1633.5" y="86.7" width="2" height="1.6" fill="none" stroke="#00ee00" stroke-width="1"/><path d="M1638.5 78.3V87.2" stroke="#00ee00" stroke-width="1"/><rect x="1637.5" y="80.7" width="2" height="6.0" fill="none" stroke="#00ee00" stroke-width="1"/><path d="M1642.5 73.9V81.2" stroke="#00ee00" stroke-width="1"/><rect x="1641.5" y="75.2" width="2" height="5.4" fill="none" stroke="#00ee00" stroke-width="1"/><path d="M1646.5 74.8V80.1" stroke="#ff0000" stroke-width="1"/><rect x="1645" y="75.2" width="3" height="2.9" fill="#ff0000"/><path d="M1650.5 76.6V80.0" stroke="#00ee00" stroke-width="1"/><rect x="1649.5" y="77.9" width="2" height="1.5" fill="none" stroke="#00ee00" stroke-width="1"/><path d="M1654.5 75.0V82.9" stroke="#ff0000" stroke-width="1"/><rect x="1653" y="77.9" width="3" height="2.6" fill="#ff0000"/><path d="M1658.5 77.8V83.1" stroke="#ff0000" stroke-width="1"/><rect x="1657" y="80.5" width="3" height="2.0" fill="#ff0000"/><path d="M1662.5 79.9V86.6" stroke="#ff0000" stroke-width="1"/><rect x="1661" y="82.4" width="3" height="2.2" fill="#ff0000"/></svg>
<div class="a " style="left:1716px;top:0px;width:1px;height:148px;background:#505a66"></div>
<div class="a " style="left:1717px;top:0px;width:147px;height:28px;background:linear-gradient(#b9cadb,#dae5f3)"></div>
<div class="a " style="left:1725px;top:8px;width:15px;height:13px;background:#f6f6f6;border:1px solid #9aa6b2;border-radius:1px"><div class="a" style="left:1px;top:1px;width:7px;height:10px;background:linear-gradient(#3a78a8,#4aa868)"></div><div class="a" style="left:11px;top:1px;width:1px;height:4px;background:#2a6a9a"></div></div>
<div class="a t" style="left:1745px;top:8.19px;font-size:11px;color:#34404e">F.US.Z...</div>
<div class="a " style="left:1793px;top:6px;width:30px;height:17px;border:1px solid #8494aa;border-radius:3px;background:linear-gradient(#e4ecf6,#c9d7e7)"></div><div class="a " style="left:1826px;top:6px;width:30px;height:17px;border:1px solid #8494aa;border-radius:3px;background:linear-gradient(#e4ecf6,#c9d7e7)"></div><div class="a " style="left:1859px;top:6px;width:30px;height:17px;border:1px solid #8494aa;border-radius:3px;background:linear-gradient(#e4ecf6,#c9d7e7)"></div>
<div class="a " style="left:1803px;top:13px;width:11px;height:5px;background:#f4f4f4;border:1px solid #454f5c;border-radius:1px"></div><div class="a " style="left:1836px;top:9px;width:11px;height:9px;border:1px solid #454f5c;background:#f4f4f4;border-radius:1px"><div class="a" style="left:2px;top:2px;width:5px;height:3px;border:1px solid #454f5c;background:#c9d7e7"></div></div>
<div class="a " style="left:1724px;top:28px;width:140px;height:120px;background:#000"></div>
<div class="a t" style="left:1730px;top:30.08px;font-size:11.3px;color:#fff">F.US.ZWAZ14  20 Min</div>
<div class="a " style="left:1847px;top:28px;width:1px;height:120px;background:#fff"></div>
<div class="a " style="left:1847px;top:96px;width:4px;height:1px;background:#fff"></div>
<div class="a t" style="left:1851px;top:90.19px;font-size:11px;color:#fff">53</div>
<div class="a " style="left:1728px;top:119px;width:114px;height:2px;background:#00e000"></div>
<svg class="a" style="left:0;top:0" width="1864" height="150"><path d="M1731.5 77.3V85.8" stroke="#00ee00" stroke-width="1"/><rect x="1730.5" y="80.5" width="2" height="1.5" fill="none" stroke="#00ee00" stroke-width="1"/><path d="M1735.5 73.8V80.6" stroke="#00ee00" stroke-width="1"/><rect x="1734.5" y="77.5" width="2" height="3.0" fill="none" stroke="#00ee00" stroke-width="1"/><path d="M1739.5 69.2V80.1" stroke="#00ee00" stroke-width="1"/><rect x="1738.5" y="72.9" width="2" height="4.6" fill="none" stroke="#00ee00" stroke-width="1"/><path d="M1743.5 70.8V74.8" stroke="#00ee00" stroke-width="1"/><rect x="1742.5" y="71.2" width="2" height="1.7" fill="none" stroke="#00ee00" stroke-width="1"/><path d="M1747.5 63.8V73.5" stroke="#00ee00" stroke-width="1"/><rect x="1746.5" y="66.0" width="2" height="5.2" fill="none" stroke="#00ee00" stroke-width="1"/><path d="M1751.5 64.3V67.8" stroke="#00ee00" stroke-width="1"/><rect x="1750.5" y="65.2" width="2" height="1.5" fill="none" stroke="#00ee00" stroke-width="1"/><path d="M1755.5 62.1V69.6" stroke="#ff0000" stroke-width="1"/><rect x="1754" y="65.2" width="3" height="3.7" fill="#ff0000"/><path d="M1759.5 68.0V72.5" stroke="#00ee00" stroke-width="1"/><rect x="1758.5" y="68.6" width="2" height="1.5" fill="none" stroke="#00ee00" stroke-width="1"/><path d="M1763.5 66.0V72.0" stroke="#00ee00" stroke-width="1"/><rect x="1762.5" y="66.0" width="2" height="2.6" fill="none" stroke="#00ee00" stroke-width="1"/><path d="M1767.5 65.1V71.4" stroke="#ff0000" stroke-width="1"/><rect x="1766" y="66.0" width="3" height="1.5" fill="#ff0000"/><path d="M1771.5 65.3V73.0" stroke="#ff0000" stroke-width="1"/><rect x="1770" y="66.4" width="3" height="2.8" fill="#ff0000"/><path d="M1775.5 65.3V70.3" stroke="#00ee00" stroke-width="1"/><rect x="1774.5" y="68.0" width="2" height="1.5" fill="none" stroke="#00ee00" stroke-width="1"/><path d="M1779.5 65.2V73.6" stroke="#ff0000" stroke-width="1"/><rect x="1778" y="68.0" width="3" height="1.7" fill="#ff0000"/><path d="M1783.5 68.5V79.5" stroke="#ff0000" stroke-width="1"/><rect x="1782" y="69.7" width="3" height="8.4" fill="#ff0000"/><path d="M1787.5 77.5V86.4" stroke="#ff0000" stroke-width="1"/><rect x="1786" y="78.1" width="3" height="8.1" fill="#ff0000"/><path d="M1791.5 83.8V91.7" stroke="#ff0000" stroke-width="1"/><rect x="1790" y="86.2" width="3" height="5.5" fill="#ff0000"/><path d="M1795.5 90.4V99.5" stroke="#ff0000" stroke-width="1"/><rect x="1794" y="91.7" width="3" height="6.5" fill="#ff0000"/><path d="M1799.5 96.3V105.0" stroke="#ff0000" stroke-width="1"/><rect x="1798" y="98.2" width="3" height="5.6" fill="#ff0000"/><path d="M1803.5 101.0V107.7" stroke="#ff0000" stroke-width="1"/><rect x="1802" y="103.8" width="3" height="3.7" fill="#ff0000"/><path d="M1807.5 107.4V117.5" stroke="#ff0000" stroke-width="1"/><rect x="1806" y="107.5" width="3" height="7.0" fill="#ff0000"/><path d="M1811.5 114.4V122.2" stroke="#ff0000" stroke-width="1"/><rect x="1810" y="114.5" width="3" height="4.5" fill="#ff0000"/><path d="M1815.5 116.7V122.2" stroke="#ff0000" stroke-width="1"/><rect x="1814" y="119.0" width="3" height="3.2" fill="#ff0000"/><path d="M1819.5 121.5V132.0" stroke="#ff0000" stroke-width="1"/><rect x="1818" y="122.2" width="3" height="6.0" fill="#ff0000"/><path d="M1823.5 125.2V140.5" stroke="#ff0000" stroke-width="1"/><rect x="1822" y="128.2" width="3" height="8.6" fill="#ff0000"/><path d="M1827.5 135.4V147.5" stroke="#ff0000" stroke-width="1"/><rect x="1826" y="136.8" width="3" height="9.3" fill="#ff0000"/><path d="M1831.5 143.0V150.5" stroke="#ff0000" stroke-width="1"/><rect x="1830" y="146.1" width="3" height="4.0" fill="#ff0000"/></svg>
<div class="a " style="left:1190px;top:148px;width:674px;height:1px;background:#505a66"></div>
<svg class="a" style="left:0;top:0" width="400" height="865"><clipPath id="cenq"><rect x="0" y="719" width="113" height="92"/></clipPath><g clip-path="url(#cenq)"><path d="M0 752L2.8 755.6L8 761.0L4.0 766.4L0 770Z" fill="#c0c0c0"/><rect x="-2" y="752" width="1" height="13" fill="#00e0ff"/><rect x="-1" y="752" width="2" height="4" fill="#00ee00"/><rect x="-1" y="766" width="3" height="4" fill="#00ee00"/><path d="M23 755L25.4 760.0L30 767.5L26.5 775.0L23 780Z" fill="#c0c0c0"/><rect x="21" y="755" width="1" height="18" fill="#00e0ff"/><rect x="22" y="755" width="2" height="6" fill="#00ee00"/><rect x="22" y="774" width="3" height="6" fill="#00ee00"/><path d="M38 740L40.8 747.6L46 759.0L42.0 770.4L38 778Z" fill="#c0c0c0"/><rect x="36" y="740" width="1" height="27" fill="#00e0ff"/><rect x="37" y="740" width="2" height="10" fill="#00ee00"/><rect x="37" y="768" width="3" height="10" fill="#00ee00"/><path d="M53 730L55.1 736.0L59 745.0L56.0 754.0L53 760Z" fill="#c0c0c0"/><rect x="51" y="730" width="1" height="21" fill="#00e0ff"/><rect x="52" y="730" width="2" height="8" fill="#00ee00"/><rect x="52" y="752" width="3" height="8" fill="#00ee00"/><path d="M68 733L71.2 739.0L77 748.0L72.5 757.0L68 763Z" fill="#c0c0c0"/><rect x="66" y="733" width="1" height="21" fill="#00e0ff"/><rect x="67" y="733" width="2" height="8" fill="#00ee00"/><rect x="67" y="756" width="3" height="8" fill="#00ee00"/><path d="M85 715L87.1 721.0L91 730.0L88.0 739.0L85 745Z" fill="#c0c0c0"/><rect x="83" y="715" width="1" height="21" fill="#00e0ff"/><rect x="84" y="715" width="2" height="8" fill="#00ee00"/><rect x="84" y="738" width="3" height="8" fill="#00ee00"/><path d="M3 760L11 752V768Z" fill="#ff0000" stroke="#000" stroke-width="0.8"/><path d="M28 776L36 768V784Z" fill="#ff0000" stroke="#000" stroke-width="0.8"/><path d="M39 755L47 747V763Z" fill="#ff0000" stroke="#000" stroke-width="0.8"/><path d="M59 743L67 735V751Z" fill="#ff0000" stroke="#000" stroke-width="0.8"/><path d="M68 739L76 731V747Z" fill="#ff0000" stroke="#000" stroke-width="0.8"/><path d="M87 723L95 715V731Z" fill="#ff0000" stroke="#000" stroke-width="0.8"/><path d="M98 722L106 714V730Z" fill="#ff0000" stroke="#000" stroke-width="0.8"/><path d="M106 723L114 715V731Z" fill="#ff0000" stroke="#000" stroke-width="0.8"/><path d="M104.5 720V810" stroke="#00ee00" stroke-dasharray="6 3"/></g><clipPath id="cca"><rect x="182" y="721" width="124" height="90"/></clipPath><g clip-path="url(#cca)"><path d="M183 755L185.8 758.6L191 764.0L187.0 772.4L183 778Z" fill="#c0c0c0"/><rect x="181" y="755" width="1" height="16" fill="#00e0ff"/><rect x="182" y="755" width="2" height="6" fill="#00ee00"/><rect x="182" y="772" width="3" height="6" fill="#00ee00"/><rect x="182" y="764" width="9" height="2" fill="#ff00ff"/><path d="M196 758L199.8 760.8L207 765.0L201.5 778.2L196 787Z" fill="#c0c0c0"/><rect x="194" y="758" width="1" height="20" fill="#00e0ff"/><rect x="195" y="758" width="2" height="7" fill="#00ee00"/><rect x="195" y="780" width="3" height="7" fill="#00ee00"/><rect x="195" y="765" width="12" height="2" fill="#ff00ff"/><path d="M212 723L214.4 740.2L219 766.0L215.5 791.8L212 809Z" fill="#c0c0c0"/><rect x="210" y="723" width="1" height="60" fill="#00e0ff"/><rect x="211" y="723" width="2" height="22" fill="#00ee00"/><rect x="211" y="788" width="3" height="22" fill="#00ee00"/><rect x="211" y="766" width="8" height="2" fill="#ff00ff"/><path d="M225 777L228.8 786.2L236 800.0L230.5 805.4L225 809Z" fill="#c0c0c0"/><rect x="223" y="777" width="1" height="22" fill="#00e0ff"/><rect x="224" y="777" width="2" height="8" fill="#00ee00"/><rect x="224" y="801" width="3" height="8" fill="#00ee00"/><rect x="224" y="800" width="12" height="2" fill="#ff00ff"/><path d="M244 762L247.5 769.2L254 780.0L249.0 792.0L244 800Z" fill="#c0c0c0"/><rect x="242" y="762" width="1" height="27" fill="#00e0ff"/><rect x="243" y="762" width="2" height="10" fill="#00ee00"/><rect x="243" y="790" width="3" height="10" fill="#00ee00"/><rect x="243" y="780" width="11" height="2" fill="#ff00ff"/><path d="M262 749L264.8 753.4L270 760.0L266.0 770.2L262 777Z" fill="#c0c0c0"/><rect x="260" y="749" width="1" height="20" fill="#00e0ff"/><rect x="261" y="749" width="2" height="7" fill="#00ee00"/><rect x="261" y="770" width="3" height="7" fill="#00ee00"/><rect x="261" y="760" width="9" height="2" fill="#ff00ff"/><path d="M277 735L279.1 749.0L283 770.0L280.0 776.6L277 781Z" fill="#c0c0c0"/><rect x="275" y="735" width="1" height="32" fill="#00e0ff"/><rect x="276" y="735" width="2" height="12" fill="#00ee00"/><rect x="276" y="770" width="3" height="12" fill="#00ee00"/><rect x="276" y="770" width="7" height="2" fill="#ff00ff"/><path d="M191 764L199 756V772Z" fill="#ff0000" stroke="#000" stroke-width="0.8"/><path d="M208 765L216 757V773Z" fill="#ff0000" stroke="#000" stroke-width="0.8"/><path d="M222 778L230 770V786Z" fill="#ff0000" stroke="#000" stroke-width="0.8"/><path d="M230 765L238 757V773Z" fill="#ff0000" stroke="#000" stroke-width="0.8"/><path d="M254 779L262 771V787Z" fill="#ff0000" stroke="#000" stroke-width="0.8"/><path d="M266 754L274 746V762Z" fill="#ff0000" stroke="#000" stroke-width="0.8"/><path d="M284 781L292 773V789Z" fill="#ff0000" stroke="#000" stroke-width="0.8"/><path d="M295 782L303 774V790Z" fill="#ff0000" stroke="#000" stroke-width="0.8"/><path d="M302 784L310 776V792Z" fill="#ff0000" stroke="#000" stroke-width="0.8"/></g></svg>
<div class="a " style="left:8px;top:9px;width:1182px;height:593px;background:#d7e4f2;border:1px solid #5a6470;border-radius:6px 6px 0 0"></div>
<div class="a " style="left:9px;top:10px;width:1180px;height:29px;background:linear-gradient(#b9cadb,#dae5f3);border-radius:5px 5px 0 0;border-top:1px solid #e4eaf2"></div>
<div class="a " style="left:16px;top:20px;width:15px;height:13px;background:linear-gradient(90deg,#3a7da0,#4aa070 60%,#f4f4f4 60%);border:1px solid #8c9aa8"></div>
<div class="a t" style="left:37px;top:21.19px;font-size:11px;color:#34404e">coco22.scss</div>
<div class="a " style="left:1084px;top:19px;width:30px;height:17px;border:1px solid #8494aa;border-radius:3px;background:linear-gradient(#e4ecf6,#c9d7e7)"></div><div class="a " style="left:1117px;top:19px;width:30px;height:17px;border:1px solid #8494aa;border-radius:3px;background:linear-gradient(#e4ecf6,#c9d7e7)"></div><div class="a " style="left:1150px;top:19px;width:30px;height:17px;border:1px solid #8494aa;border-radius:3px;background:linear-gradient(#e4ecf6,#c9d7e7)"></div>
<div class="a " style="left:1094px;top:26px;width:11px;height:5px;background:#f4f4f4;border:1px solid #454f5c;border-radius:1px"></div><div class="a " style="left:1127px;top:22px;width:11px;height:9px;border:1px solid #454f5c;background:#f4f4f4;border-radius:1px"><div class="a" style="left:2px;top:2px;width:5px;height:3px;border:1px solid #454f5c;background:#c9d7e7"></div></div><svg class="a" style="left:1159px;top:21px" width="13" height="11"><path d="M2.5 2L10.5 9M10.5 2L2.5 9" stroke="#454f5c" stroke-width="3.6" stroke-linecap="round"/><path d="M2.5 2L10.5 9M10.5 2L2.5 9" stroke="#f4f4f4" stroke-width="1.9" stroke-linecap="round"/></svg>
<div class="a " style="left:16px;top:39px;width:1166px;height:553px;background:#f0f0f0;border-top:2px solid #6d6d6d;border-left:1px solid #808080"></div>
<div class="a " style="left:17px;top:41px;width:269px;height:23px;background:#fff;border:1px solid;border-color:#808080 #fff #fff #808080;box-shadow:inset 1px 1px 0 #404040"></div>
<div class="a t" style="left:21px;top:46.34px;font-size:12px;letter-spacing:-0.5px;">Sheet19</div>
<div class="a " style="left:268px;top:43px;width:17px;height:19px;background:#f0f0f0;border:1px solid;border-color:#fff #696969 #696969 #fff;box-shadow:inset -1px -1px 0 #a0a0a0, inset 1px 1px 0 #e3e3e3"></div>
<div class="a" style="left:273px;top:50px;width:0;height:0;border-left:3px solid transparent;border-right:3px solid transparent;border-top:4px solid #000"></div>
<div class="a " style="left:287px;top:41px;width:847px;height:25px;background:#f0f0f0;border:1px solid;border-color:#808080 #fff #fff #808080;box-shadow:inset 1px 1px 0 #404040"></div>
<div class="a t" style="left:293px;top:45.84px;font-size:12px;letter-spacing:-0.29px;">=IF(AND(WEEKDAY(A3)=2,A4-INT(A4)&lt;TIMEVALUE("03:45:00"),A3-INT(A3)&gt;=TIMEVALUE("03:45:00")),B3,K4)</div>
<div class="a " style="left:1136px;top:42px;width:44px;height:24px;background:#f0f0f0;border:1px solid;border-color:#fff #696969 #696969 #fff;box-shadow:inset -1px -1px 0 #a0a0a0, inset 1px 1px 0 #e3e3e3"></div>
<div class="a t" style="left:1140px;top:47.34px;font-size:12px;letter-spacing:-0.3px;">Details</div>
<div class="a " style="left:17px;top:69px;width:1147px;height:507px;background:#fff"></div>
<div class="a " style="left:17px;top:69px;width:1147px;height:24px;background:#f0f0f0;border-top:1px solid #a0a0a0"></div>
<div class="a " style="left:17px;top:93px;width:38px;height:483px;background:#f0f0f0"></div>
<div class="a " style="left:55px;top:69px;width:1px;height:507px;background:#a0a0a0"></div>
<div class="a " style="left:155px;top:69px;width:1px;height:507px;background:#a0a0a0"></div>
<div class="a " style="left:255px;top:69px;width:1px;height:507px;background:#a0a0a0"></div>
<div class="a " style="left:355px;top:69px;width:1px;height:507px;background:#a0a0a0"></div>
<div class="a " style="left:455px;top:69px;width:1px;height:507px;background:#a0a0a0"></div>
<div class="a " style="left:555px;top:69px;width:1px;height:507px;background:#a0a0a0"></div>
<div class="a " style="left:655px;top:69px;width:1px;height:507px;background:#a0a0a0"></div>
<div class="a " style="left:755px;top:69px;width:1px;height:507px;background:#a0a0a0"></div>
<div class="a " style="left:855px;top:69px;width:1px;height:507px;background:#a0a0a0"></div>
<div class="a " style="left:955px;top:69px;width:1px;height:507px;background:#a0a0a0"></div>
<div class="a " style="left:1055px;top:69px;width:1px;height:507px;background:#a0a0a0"></div>
<div class="a " style="left:1155px;top:69px;width:1px;height:507px;background:#a0a0a0"></div>
<div class="a " style="left:17px;top:93px;width:1147px;height:1px;background:#a0a0a0"></div>
<div class="a " style="left:17px;top:112px;width:1147px;height:1px;background:#a0a0a0"></div>
<div class="a " style="left:17px;top:131px;width:1147px;height:1px;background:#a0a0a0"></div>
<div class="a " style="left:17px;top:150px;width:1147px;height:1px;background:#a0a0a0"></div>
<div class="a " style="left:17px;top:169px;width:1147px;height:1px;background:#a0a0a0"></div>
<div class="a " style="left:17px;top:188px;width:1147px;height:1px;background:#a0a0a0"></div>
<div class="a " style="left:17px;top:207px;width:1147px;height:1px;background:#a0a0a0"></div>
<div class="a " style="left:17px;top:226px;width:1147px;height:1px;background:#a0a0a0"></div>
<div class="a " style="left:17px;top:245px;width:1147px;height:1px;background:#a0a0a0"></div>
<div class="a " style="left:17px;top:264px;width:1147px;height:1px;background:#a0a0a0"></div>
<div class="a " style="left:17px;top:283px;width:1147px;height:1px;background:#a0a0a0"></div>
<div class="a " style="left:17px;top:302px;width:1147px;height:1px;background:#a0a0a0"></div>
<div class="a " style="left:17px;top:321px;width:1147px;height:1px;background:#a0a0a0"></div>
<div class="a " style="left:17px;top:340px;width:1147px;height:1px;background:#a0a0a0"></div>
<div class="a " style="left:17px;top:359px;width:1147px;height:1px;background:#a0a0a0"></div>
<div class="a " style="left:17px;top:378px;width:1147px;height:1px;background:#a0a0a0"></div>
<div class="a " style="left:17px;top:397px;width:1147px;height:1px;background:#a0a0a0"></div>
<div class="a " style="left:17px;top:416px;width:1147px;height:1px;background:#a0a0a0"></div>
<div class="a " style="left:17px;top:435px;width:1147px;height:1px;background:#a0a0a0"></div>
<div class="a " style="left:17px;top:454px;width:1147px;height:1px;background:#a0a0a0"></div>
<div class="a " style="left:17px;top:473px;width:1147px;height:1px;background:#a0a0a0"></div>
<div class="a " style="left:17px;top:492px;width:1147px;height:1px;background:#a0a0a0"></div>
<div class="a " style="left:17px;top:511px;width:1147px;height:1px;background:#a0a0a0"></div>
<div class="a " style="left:17px;top:530px;width:1147px;height:1px;background:#a0a0a0"></div>
<div class="a " style="left:17px;top:549px;width:1147px;height:1px;background:#a0a0a0"></div>
<div class="a " style="left:17px;top:568px;width:1147px;height:1px;background:#a0a0a0"></div>
<div class="a " style="left:1055px;top:90px;width:101px;height:3px;background:#a0a0a0"></div>
<div class="a " style="left:52px;top:131px;width:3px;height:19px;background:#a0a0a0"></div>
<div class="a t" style="left:22px;top:75.34px;font-size:12px;letter-spacing:-0.3px;">K3</div>
<div class="a t" style="left:58px;top:75.34px;font-size:12px;width:100px;text-align:center;">A</div>
<div class="a t" style="left:158px;top:75.34px;font-size:12px;width:100px;text-align:center;">B</div>
<div class="a t" style="left:258px;top:75.34px;font-size:12px;width:100px;text-align:center;">C</div>
<div class="a t" style="left:358px;top:75.34px;font-size:12px;width:100px;text-align:center;">D</div>
<div class="a t" style="left:458px;top:75.34px;font-size:12px;width:100px;text-align:center;">E</div>
<div class="a t" style="left:558px;top:75.34px;font-size:12px;width:100px;text-align:center;">F</div>
<div class="a t" style="left:658px;top:75.34px;font-size:12px;width:100px;text-align:center;">G</div>
<div class="a t" style="left:758px;top:75.34px;font-size:12px;width:100px;text-align:center;">H</div>
<div class="a t" style="left:858px;top:75.34px;font-size:12px;width:100px;text-align:center;">I</div>
<div class="a t" style="left:958px;top:75.34px;font-size:12px;width:100px;text-align:center;">J</div>
<div class="a t" style="left:1058px;top:75.34px;font-size:12px;width:100px;text-align:center;">K</div>
<div class="a t" style="left:17px;top:96.84px;font-size:12px;letter-spacing:-0.4px;width:38px;text-align:center;">1</div>
<div class="a t" style="left:17px;top:115.84px;font-size:12px;letter-spacing:-0.4px;width:38px;text-align:center;">2</div>
<div class="a t" style="left:17px;top:134.84px;font-size:12px;letter-spacing:-0.4px;width:38px;text-align:center;">3</div>
<div class="a t" style="left:17px;top:153.84px;font-size:12px;letter-spacing:-0.4px;width:38px;text-align:center;">4</div>
<div class="a t" style="left:17px;top:172.84px;font-size:12px;letter-spacing:-0.4px;width:38px;text-align:center;">5</div>
<div class="a t" style="left:17px;top:191.84px;font-size:12px;letter-spacing:-0.4px;width:38px;text-align:center;">6</div>
<div class="a t" style="left:17px;top:210.84px;font-size:12px;letter-spacing:-0.4px;width:38px;text-align:center;">7</div>
<div class="a t" style="left:17px;top:229.84px;font-size:12px;letter-spacing:-0.4px;width:38px;text-align:center;">8</div>
<div class="a t" style="left:17px;top:248.84px;font-size:12px;letter-spacing:-0.4px;width:38px;text-align:center;">9</div>
<div class="a t" style="left:17px;top:267.84px;font-size:12px;letter-spacing:-0.4px;width:38px;text-align:center;">10</div>
<div class="a t" style="left:17px;top:286.84px;font-size:12px;letter-spacing:-0.4px;width:38px;text-align:center;">11</div>
<div class="a t" style="left:17px;top:305.84px;font-size:12px;letter-spacing:-0.4px;width:38px;text-align:center;">12</div>
<div class="a t" style="left:17px;top:324.84px;font-size:12px;letter-spacing:-0.4px;width:38px;text-align:center;">13</div>
<div class="a t" style="left:17px;top:343.84px;font-size:12px;letter-spacing:-0.4px;width:38px;text-align:center;">14</div>
<div class="a t" style="left:17px;top:362.84px;font-size:12px;letter-spacing:-0.4px;width:38px;text-align:center;">15</div>
<div class="a t" style="left:17px;top:381.84px;font-size:12px;letter-spacing:-0.4px;width:38px;text-align:center;">16</div>
<div class="a t" style="left:17px;top:400.84px;font-size:12px;letter-spacing:-0.4px;width:38px;text-align:center;">17</div>
<div class="a t" style="left:17px;top:419.84px;font-size:12px;letter-spacing:-0.4px;width:38px;text-align:center;">18</div>
<div class="a t" style="left:17px;top:438.84px;font-size:12px;letter-spacing:-0.4px;width:38px;text-align:center;">19</div>
<div class="a t" style="left:17px;top:457.84px;font-size:12px;letter-spacing:-0.4px;width:38px;text-align:center;">20</div>
<div class="a t" style="left:17px;top:476.84px;font-size:12px;letter-spacing:-0.4px;width:38px;text-align:center;">21</div>
<div class="a t" style="left:17px;top:495.84px;font-size:12px;letter-spacing:-0.4px;width:38px;text-align:center;">22</div>
<div class="a t" style="left:17px;top:514.84px;font-size:12px;letter-spacing:-0.4px;width:38px;text-align:center;">23</div>
<div class="a t" style="left:17px;top:533.84px;font-size:12px;letter-spacing:-0.4px;width:38px;text-align:center;">24</div>
<div class="a t" style="left:17px;top:552.84px;font-size:12px;letter-spacing:-0.4px;width:38px;text-align:center;">25</div>
<div class="a t" style="left:17px;top:571.84px;font-size:12px;letter-spacing:-0.4px;width:38px;text-align:center;">26</div>
<div class="a t" style="left:63px;top:96.84px;font-size:12px;letter-spacing:-0.4px;">[ID1] F.US.CCE...</div>
<div class="a t" style="left:359px;top:96.84px;font-size:12px;letter-spacing:-0.4px;">Formula Source...</div>
<div class="a t" style="left:60px;top:115.84px;font-size:12px;letter-spacing:-0.4px;">Date Time</div>
<div class="a t" style="left:160px;top:115.84px;font-size:12px;letter-spacing:-0.4px;">[ID1.SG1] Open</div>
<div class="a t" style="left:260px;top:115.84px;font-size:12px;letter-spacing:-0.4px;">[ID1.SG2] High</div>
<div class="a t" style="left:360px;top:115.84px;font-size:12px;letter-spacing:-0.4px;">[ID1.SG3] Low</div>
<div class="a t" style="left:460px;top:115.84px;font-size:12px;letter-spacing:-0.4px;">[ID1.SG4] Last</div>
<div class="a t" style="left:560px;top:115.84px;font-size:12px;letter-spacing:-0.4px;">[ID1.SG5] Volume</div>
<div class="a t" style="left:1062px;top:115.84px;font-size:12px;letter-spacing:-0.4px;">K</div>
<div class="a t" style="left:1161px;top:115.19px;font-size:11px;">L</div>
<div class="a t" style="left:63px;top:134.84px;font-size:12px;letter-spacing:-0.4px;">2014-10-24  07:...</div>
<div class="a t" style="left:155px;top:134.84px;font-size:12px;letter-spacing:-0.4px;width:96.4px;text-align:right;">3106</div>
<div class="a t" style="left:255px;top:134.84px;font-size:12px;letter-spacing:-0.4px;width:96.4px;text-align:right;">3117</div>
<div class="a t" style="left:63px;top:153.84px;font-size:12px;letter-spacing:-0.4px;">2014-10-24  07:...</div>
<div class="a t" style="left:155px;top:153.84px;font-size:12px;letter-spacing:-0.4px;width:96.4px;text-align:right;">3106</div>
<div class="a t" style="left:255px;top:153.84px;font-size:12px;letter-spacing:-0.4px;width:96.4px;text-align:right;">3117</div>
<div class="a t" style="left:63px;top:172.84px;font-size:12px;letter-spacing:-0.4px;">2014-10-24  07:...</div>
<div class="a t" style="left:155px;top:172.84px;font-size:12px;letter-spacing:-0.4px;width:96.4px;text-align:right;">3106</div>
<div class="a t" style="left:255px;top:172.84px;font-size:12px;letter-spacing:-0.4px;width:96.4px;text-align:right;">3117</div>
<div class="a t" style="left:63px;top:191.84px;font-size:12px;letter-spacing:-0.4px;">2014-10-24  07:...</div>
<div class="a t" style="left:155px;top:191.84px;font-size:12px;letter-spacing:-0.4px;width:96.4px;text-align:right;">3106</div>
<div class="a t" style="left:255px;top:191.84px;font-size:12px;letter-spacing:-0.4px;width:96.4px;text-align:right;">3117</div>
<div class="a t" style="left:63px;top:210.84px;font-size:12px;letter-spacing:-0.4px;">2014-10-24  07:...</div>
<div class="a t" style="left:155px;top:210.84px;font-size:12px;letter-spacing:-0.4px;width:96.4px;text-align:right;">3106</div>
<div class="a t" style="left:255px;top:210.84px;font-size:12px;letter-spacing:-0.4px;width:96.4px;text-align:right;">3117</div>
<div class="a t" style="left:63px;top:229.84px;font-size:12px;letter-spacing:-0.4px;">2014-10-24  07:...</div>
<div class="a t" style="left:155px;top:229.84px;font-size:12px;letter-spacing:-0.4px;width:96.4px;text-align:right;">3106</div>
<div class="a t" style="left:255px;top:229.84px;font-size:12px;letter-spacing:-0.4px;width:96.4px;text-align:right;">3117</div>
<div class="a t" style="left:63px;top:248.84px;font-size:12px;letter-spacing:-0.4px;">2014-10-24  07:...</div>
<div class="a t" style="left:155px;top:248.84px;font-size:12px;letter-spacing:-0.4px;width:96.4px;text-align:right;">3106</div>
<div class="a t" style="left:255px;top:248.84px;font-size:12px;letter-spacing:-0.4px;width:96.4px;text-align:right;">3117</div>
<div class="a t" style="left:63px;top:267.84px;font-size:12px;letter-spacing:-0.4px;">2014-10-24  07:...</div>
<div class="a t" style="left:155px;top:267.84px;font-size:12px;letter-spacing:-0.4px;width:96.4px;text-align:right;">3106</div>
<div class="a t" style="left:255px;top:267.84px;font-size:12px;letter-spacing:-0.4px;width:96.4px;text-align:right;">3117</div>
<div class="a t" style="left:63px;top:286.84px;font-size:12px;letter-spacing:-0.4px;">2014-10-24  07:...</div>
<div class="a t" style="left:155px;top:286.84px;font-size:12px;letter-spacing:-0.4px;width:96.4px;text-align:right;">3106</div>
<div class="a t" style="left:255px;top:286.84px;font-size:12px;letter-spacing:-0.4px;width:96.4px;text-align:right;">3117</div>
<div class="a t" style="left:63px;top:305.84px;font-size:12px;letter-spacing:-0.4px;">2014-10-24  07:...</div>
<div class="a t" style="left:155px;top:305.84px;font-size:12px;letter-spacing:-0.4px;width:96.4px;text-align:right;">3106</div>
<div class="a t" style="left:255px;top:305.84px;font-size:12px;letter-spacing:-0.4px;width:96.4px;text-align:right;">3117</div>
<div class="a t" style="left:63px;top:324.84px;font-size:12px;letter-spacing:-0.4px;">2014-10-23  17:...</div>
<div class="a t" style="left:155px;top:324.84px;font-size:12px;letter-spacing:-0.4px;width:96.4px;text-align:right;">3115</div>
<div class="a t" style="left:255px;top:324.84px;font-size:12px;letter-spacing:-0.4px;width:96.4px;text-align:right;">3130</div>
<div class="a t" style="left:63px;top:343.84px;font-size:12px;letter-spacing:-0.4px;">2014-10-23  17:...</div>
<div class="a t" style="left:155px;top:343.84px;font-size:12px;letter-spacing:-0.4px;width:96.4px;text-align:right;">3115</div>
<div class="a t" style="left:255px;top:343.84px;font-size:12px;letter-spacing:-0.4px;width:96.4px;text-align:right;">3130</div>
<div class="a t" style="left:63px;top:362.84px;font-size:12px;letter-spacing:-0.4px;">2014-10-23  17:...</div>
<div class="a t" style="left:155px;top:362.84px;font-size:12px;letter-spacing:-0.4px;width:96.4px;text-align:right;">3115</div>
<div class="a t" style="left:255px;top:362.84px;font-size:12px;letter-spacing:-0.4px;width:96.4px;text-align:right;">3130</div>
<div class="a t" style="left:63px;top:381.84px;font-size:12px;letter-spacing:-0.4px;">2014-10-23  17:...</div>
<div class="a t" style="left:155px;top:381.84px;font-size:12px;letter-spacing:-0.4px;width:96.4px;text-align:right;">3115</div>
<div class="a t" style="left:255px;top:381.84px;font-size:12px;letter-spacing:-0.4px;width:96.4px;text-align:right;">3130</div>
<div class="a t" style="left:63px;top:400.84px;font-size:12px;letter-spacing:-0.4px;">2014-10-23  17:...</div>
<div class="a t" style="left:155px;top:400.84px;font-size:12px;letter-spacing:-0.4px;width:96.4px;text-align:right;">3115</div>
<div class="a t" style="left:255px;top:400.84px;font-size:12px;letter-spacing:-0.4px;width:96.4px;text-align:right;">3130</div>
<div class="a t" style="left:63px;top:419.84px;font-size:12px;letter-spacing:-0.4px;">2014-10-23  17:...</div>
<div class="a t" style="left:155px;top:419.84px;font-size:12px;letter-spacing:-0.4px;width:96.4px;text-align:right;">3115</div>
<div class="a t" style="left:255px;top:419.84px;font-size:12px;letter-spacing:-0.4px;width:96.4px;text-align:right;">3130</div>
<div class="a t" style="left:63px;top:438.84px;font-size:12px;letter-spacing:-0.4px;">2014-10-23  17:...</div>
<div class="a t" style="left:155px;top:438.84px;font-size:12px;letter-spacing:-0.4px;width:96.4px;text-align:right;">3115</div>
<div class="a t" style="left:255px;top:438.84px;font-size:12px;letter-spacing:-0.4px;width:96.4px;text-align:right;">3130</div>
<div class="a t" style="left:63px;top:457.84px;font-size:12px;letter-spacing:-0.4px;">2014-10-23  17:...</div>
<div class="a t" style="left:155px;top:457.84px;font-size:12px;letter-spacing:-0.4px;width:96.4px;text-align:right;">3115</div>
<div class="a t" style="left:255px;top:457.84px;font-size:12px;letter-spacing:-0.4px;width:96.4px;text-align:right;">3130</div>
<div class="a t" style="left:63px;top:476.84px;font-size:12px;letter-spacing:-0.4px;">2014-10-23  17:...</div>
<div class="a t" style="left:155px;top:476.84px;font-size:12px;letter-spacing:-0.4px;width:96.4px;text-align:right;">3115</div>
<div class="a t" style="left:255px;top:476.84px;font-size:12px;letter-spacing:-0.4px;width:96.4px;text-align:right;">3130</div>
<div class="a t" style="left:63px;top:495.84px;font-size:12px;letter-spacing:-0.4px;">2014-10-23  17:...</div>
<div class="a t" style="left:155px;top:495.84px;font-size:12px;letter-spacing:-0.4px;width:96.4px;text-align:right;">3115</div>
<div class="a t" style="left:255px;top:495.84px;font-size:12px;letter-spacing:-0.4px;width:96.4px;text-align:right;">3130</div>
<div class="a t" style="left:63px;top:514.84px;font-size:12px;letter-spacing:-0.4px;">2014-10-23  17:...</div>
<div class="a t" style="left:155px;top:514.84px;font-size:12px;letter-spacing:-0.4px;width:96.4px;text-align:right;">3115</div>
<div class="a t" style="left:255px;top:514.84px;font-size:12px;letter-spacing:-0.4px;width:96.4px;text-align:right;">3130</div>
<div class="a t" style="left:63px;top:533.84px;font-size:12px;letter-spacing:-0.4px;">2014-10-23  17:...</div>
<div class="a t" style="left:155px;top:533.84px;font-size:12px;letter-spacing:-0.4px;width:96.4px;text-align:right;">3115</div>
<div class="a t" style="left:255px;top:533.84px;font-size:12px;letter-spacing:-0.4px;width:96.4px;text-align:right;">3130</div>
<div class="a t" style="left:63px;top:552.84px;font-size:12px;letter-spacing:-0.4px;">2014-10-23  07:...</div>
<div class="a t" style="left:155px;top:552.84px;font-size:12px;letter-spacing:-0.4px;width:96.4px;text-align:right;">3099</div>
<div class="a t" style="left:255px;top:552.84px;font-size:12px;letter-spacing:-0.4px;width:96.4px;text-align:right;">3175</div>
<div class="a t" style="left:63px;top:571.84px;font-size:12px;letter-spacing:-0.4px;">2014-10-23  07:...</div>
<div class="a t" style="left:155px;top:571.84px;font-size:12px;letter-spacing:-0.4px;width:96.4px;text-align:right;">3099</div>
<div class="a t" style="left:255px;top:571.84px;font-size:12px;letter-spacing:-0.4px;width:96.4px;text-align:right;">3175</div>
<div class="a t" style="left:355px;top:134.84px;font-size:12px;letter-spacing:-0.4px;width:96.4px;text-align:right;">3037</div>
<div class="a t" style="left:455px;top:134.84px;font-size:12px;letter-spacing:-0.4px;width:96.4px;text-align:right;">3047</div>
<div class="a t" style="left:555px;top:134.84px;font-size:12px;letter-spacing:-0.4px;width:96.4px;text-align:right;">12846</div>
<div class="a " style="left:1055px;top:131px;width:102px;height:21px;border:3px solid #000"></div>
<div class="a " style="left:1164px;top:69px;width:17px;height:507px;background:#f6f6f6"></div>
<div class="a " style="left:1164px;top:69px;width:17px;height:16px;background:#f0f0f0;border:1px solid;border-color:#fff #696969 #696969 #fff;box-shadow:inset -1px -1px 0 #a0a0a0, inset 1px 1px 0 #e3e3e3"></div>
<div class="a" style="left:1169px;top:74px;width:0;height:0;border-left:3px solid transparent;border-right:3px solid transparent;border-bottom:4px solid #000"></div>
<div class="a " style="left:1164px;top:86px;width:17px;height:16px;background:#f0f0f0;border:1px solid;border-color:#fff #696969 #696969 #fff;box-shadow:inset -1px -1px 0 #a0a0a0, inset 1px 1px 0 #e3e3e3"></div>
<div class="a " style="left:17px;top:576px;width:1164px;height:16px;background:#f6f6f6"></div>
<div class="a " style="left:17px;top:576px;width:16px;height:16px;background:#f0f0f0;border:1px solid;border-color:#fff #696969 #696969 #fff;box-shadow:inset -1px -1px 0 #a0a0a0, inset 1px 1px 0 #e3e3e3"></div>
<div class="a" style="left:22px;top:580px;width:0;height:0;border-top:4px solid transparent;border-bottom:4px solid transparent;border-right:4px solid #000"></div>
<div class="a " style="left:1156px;top:-2px;width:384px;height:20px;background:#f0f0f0;border:1px solid #8a96a4;border-top:none"></div>
<div class="a " style="left:1167px;top:-2px;width:169px;height:8px;background:#f4f4f4;border:1px solid #a0a0a0;border-top:none;box-shadow:inset 0 -1px 0 #fff"></div>
<div class="a " style="left:1343px;top:-2px;width:127px;height:8px;background:#f4f4f4;border:1px solid #a0a0a0;border-top:none;box-shadow:inset 0 -1px 0 #fff"></div>
<div class="a " style="left:1477px;top:-2px;width:52px;height:9px;background:#f0f0f0;border:1px solid #707070;border-top:none"></div>
<div class="a " style="left:1232px;top:18px;width:31px;height:4px;border:1px solid #7d8ea6;border-top:none;border-radius:0 0 3px 3px;background:#cfdbe8"></div>
<div class="a " style="left:1265px;top:18px;width:31px;height:4px;border:1px solid #7d8ea6;border-top:none;border-radius:0 0 3px 3px;background:#cfdbe8"></div>
<div class="a " style="left:1298px;top:18px;width:31px;height:4px;border:1px solid #7d8ea6;border-top:none;border-radius:0 0 3px 3px;background:#cfdbe8"></div>
<div class="a " style="left:1428px;top:18px;width:31px;height:4px;border:1px solid #7d8ea6;border-top:none;border-radius:0 0 3px 3px;background:#cfdbe8"></div>
<div class="a " style="left:1461px;top:18px;width:31px;height:4px;border:1px solid #7d8ea6;border-top:none;border-radius:0 0 3px 3px;background:#cfdbe8"></div>
<div class="a " style="left:1494px;top:18px;width:31px;height:4px;border:1px solid #7d8ea6;border-top:none;border-radius:0 0 3px 3px;background:#cfdbe8"></div>
<div class="a " style="left:383px;top:148px;width:1483px;height:719px;background:#d7e4f2;border:1px solid #5a6470;border-radius:6px 0 0 0"></div>
<div class="a " style="left:384px;top:149px;width:1481px;height:29px;background:linear-gradient(#b9cadb,#dae5f3);border-radius:5px 0 0 0;border-top:1px solid #e4eaf2"></div>
<div class="a " style="left:392px;top:158px;width:15px;height:13px;background:#f6f6f6;border:1px solid #9aa6b2;border-radius:1px"><div class="a" style="left:1px;top:1px;width:7px;height:10px;background:linear-gradient(#3a78a8,#4aa868)"></div><div class="a" style="left:11px;top:1px;width:1px;height:4px;background:#2a6a9a"></div></div>
<div class="a t" style="left:412px;top:159.19px;font-size:11px;color:#34404e">F.US.CCEZ14  #19  Cocoa (ICE): December 2014</div>
<div class="a " style="left:1774px;top:157px;width:30px;height:17px;border:1px solid #8494aa;border-radius:3px;background:linear-gradient(#e4ecf6,#c9d7e7)"></div><div class="a " style="left:1807px;top:157px;width:30px;height:17px;border:1px solid #8494aa;border-radius:3px;background:linear-gradient(#e4ecf6,#c9d7e7)"></div><div class="a " style="left:1840px;top:157px;width:30px;height:17px;border:1px solid #8494aa;border-radius:3px;background:linear-gradient(#e4ecf6,#c9d7e7)"></div><div class="a " style="left:1784px;top:165px;width:11px;height:5px;background:#f4f4f4;border:1px solid #454f5c;border-radius:1px"></div><div class="a " style="left:1817px;top:161px;width:11px;height:9px;border:1px solid #454f5c;background:#f4f4f4;border-radius:1px"><div class="a" style="left:2px;top:2px;width:5px;height:3px;border:1px solid #454f5c;background:#c9d7e7"></div></div><svg class="a" style="left:1849px;top:160px" width="13" height="11"><path d="M2.5 2L10.5 9M10.5 2L2.5 9" stroke="#454f5c" stroke-width="3.6" stroke-linecap="round"/><path d="M2.5 2L10.5 9M10.5 2L2.5 9" stroke="#f4f4f4" stroke-width="1.9" stroke-linecap="round"/></svg>
<div class="a " style="left:390px;top:177px;width:1474px;height:1px;background:#6d6d6d"></div>
<div class="a " style="left:390px;top:177px;width:2px;height:661px;background:#a0a0a0"></div>
<div class="a " style="left:392px;top:178px;width:1472px;height:660px;background:#000"></div>
<div class="a " style="left:396px;top:194px;width:33px;height:623px;background:#2a2a2a"></div>
<div class="a " style="left:456px;top:194px;width:33px;height:623px;background:#2a2a2a"></div>
<div class="a " style="left:522px;top:194px;width:36px;height:623px;background:#2a2a2a"></div>
<div class="a " style="left:594px;top:194px;width:27px;height:623px;background:#2a2a2a"></div>
<div class="a " style="left:654px;top:194px;width:33px;height:623px;background:#2a2a2a"></div>
<div class="a " style="left:720px;top:194px;width:30px;height:623px;background:#2a2a2a"></div>
<div class="a " style="left:777px;top:194px;width:30px;height:623px;background:#2a2a2a"></div>
<div class="a " style="left:843px;top:194px;width:36px;height:623px;background:#2a2a2a"></div>
<div class="a " style="left:915px;top:194px;width:30px;height:623px;background:#2a2a2a"></div>
<div class="a " style="left:981px;top:194px;width:30px;height:623px;background:#2a2a2a"></div>
<div class="a " style="left:1041px;top:194px;width:30px;height:623px;background:#2a2a2a"></div>
<div class="a " style="left:1104px;top:194px;width:27px;height:623px;background:#2a2a2a"></div>
<div class="a " style="left:1167px;top:194px;width:30px;height:623px;background:#2a2a2a"></div>
<div class="a " style="left:1227px;top:194px;width:30px;height:623px;background:#2a2a2a"></div>
<div class="a " style="left:1290px;top:194px;width:33px;height:623px;background:#2a2a2a"></div>
<div class="a " style="left:1359px;top:194px;width:36px;height:623px;background:#2a2a2a"></div>
<div class="a " style="left:1422px;top:194px;width:33px;height:623px;background:#2a2a2a"></div>
<div class="a " style="left:1491px;top:194px;width:36px;height:623px;background:#2a2a2a"></div>
<div class="a " style="left:1560px;top:194px;width:33px;height:623px;background:#2a2a2a"></div>
<div class="a " style="left:1632px;top:194px;width:33px;height:623px;background:#2a2a2a"></div>
<div class="a " style="left:1701px;top:194px;width:33px;height:623px;background:#2a2a2a"></div>
<div class="a " style="left:1767px;top:194px;width:36px;height:623px;background:#2a2a2a"></div>
<svg class="a" style="left:0;top:0" width="1864" height="865"><rect x="394" y="207" width="1" height="42" fill="#00e0ff"/><rect x="396" y="207" width="2" height="68" fill="#00ee00"/><rect x="399" y="212" width="2" height="6" fill="#00ee00"/><rect x="399" y="242" width="2" height="16" fill="#00ee00"/><rect x="396" y="218" width="2" height="24" fill="#c8c8c8"/><rect x="399" y="219" width="2" height="22" fill="#c8c8c8"/><rect x="402" y="221" width="2" height="19" fill="#c8c8c8"/><rect x="405" y="223" width="2" height="15" fill="#c8c8c8"/><rect x="408" y="225" width="2" height="11" fill="#c8c8c8"/><rect x="411" y="228" width="2" height="6" fill="#c8c8c8"/><rect x="396" y="231" width="18" height="1" fill="#ff00ff"/><path d="M416 225L424 217V233Z" fill="#ff0000" stroke="#000" stroke-width="1"/><rect x="430" y="207" width="1" height="76" fill="#00e0ff"/><rect x="432" y="207" width="2" height="122" fill="#00ee00"/><rect x="435" y="215" width="2" height="8" fill="#00ee00"/><rect x="435" y="302" width="2" height="14" fill="#00ee00"/><rect x="432" y="223" width="2" height="79" fill="#c8c8c8"/><rect x="435" y="237" width="2" height="55" fill="#c8c8c8"/><rect x="438" y="258" width="2" height="20" fill="#c8c8c8"/><rect x="432" y="269" width="9" height="1" fill="#ff00ff"/><path d="M440 295L448 287V303Z" fill="#ff0000" stroke="#000" stroke-width="1"/><rect x="457" y="256" width="1" height="32" fill="#00e0ff"/><rect x="459" y="256" width="2" height="51" fill="#00ee00"/><rect x="462" y="264" width="2" height="8" fill="#00ee00"/><rect x="462" y="300" width="2" height="4" fill="#00ee00"/><rect x="459" y="272" width="2" height="28" fill="#c8c8c8"/><rect x="462" y="273" width="2" height="25" fill="#c8c8c8"/><rect x="465" y="274" width="2" height="22" fill="#c8c8c8"/><rect x="468" y="276" width="2" height="17" fill="#c8c8c8"/><rect x="471" y="278" width="2" height="12" fill="#c8c8c8"/><rect x="474" y="280" width="2" height="7" fill="#c8c8c8"/><rect x="459" y="282" width="18" height="1" fill="#ff00ff"/><path d="M475 282L483 274V290Z" fill="#ff0000" stroke="#000" stroke-width="1"/><rect x="490" y="276" width="1" height="61" fill="#00e0ff"/><rect x="492" y="276" width="2" height="98" fill="#00ee00"/><rect x="495" y="295" width="2" height="19" fill="#00ee00"/><rect x="495" y="360" width="2" height="7" fill="#00ee00"/><rect x="492" y="314" width="2" height="46" fill="#c8c8c8"/><rect x="495" y="315" width="2" height="40" fill="#c8c8c8"/><rect x="498" y="316" width="2" height="32" fill="#c8c8c8"/><rect x="501" y="318" width="2" height="22" fill="#c8c8c8"/><rect x="504" y="319" width="2" height="12" fill="#c8c8c8"/><rect x="492" y="321" width="15" height="1" fill="#ff00ff"/><path d="M509 340L517 332V348Z" fill="#ff0000" stroke="#000" stroke-width="1"/><rect x="523" y="318" width="1" height="22" fill="#00e0ff"/><rect x="525" y="318" width="2" height="36" fill="#00ee00"/><rect x="528" y="324" width="2" height="6" fill="#00ee00"/><rect x="528" y="352" width="2" height="1" fill="#00ee00"/><rect x="525" y="329" width="2" height="23" fill="#c8c8c8"/><rect x="528" y="330" width="2" height="21" fill="#c8c8c8"/><rect x="531" y="331" width="2" height="18" fill="#c8c8c8"/><rect x="534" y="332" width="2" height="14" fill="#c8c8c8"/><rect x="537" y="333" width="2" height="10" fill="#c8c8c8"/><rect x="540" y="334" width="2" height="6" fill="#c8c8c8"/><rect x="525" y="336" width="18" height="1" fill="#ff00ff"/><path d="M545 334L553 326V342Z" fill="#ff0000" stroke="#000" stroke-width="1"/><rect x="982" y="760" width="1" height="22" fill="#00e0ff"/><rect x="984" y="760" width="2" height="35" fill="#00ee00"/><rect x="987" y="766" width="2" height="6" fill="#00ee00"/><rect x="987" y="782" width="2" height="6" fill="#00ee00"/><rect x="984" y="771" width="2" height="11" fill="#c8c8c8"/><rect x="987" y="773" width="2" height="8" fill="#c8c8c8"/><rect x="990" y="775" width="2" height="3" fill="#c8c8c8"/><rect x="984" y="776" width="9" height="1" fill="#ff00ff"/><path d="M1050 700L1058 692V708Z" fill="#ff0000" stroke="#000" stroke-width="1"/><rect x="1014" y="771" width="2" height="12" fill="#00ee00"/><rect x="1017" y="771" width="2" height="12" fill="#00ee00"/><rect x="1020" y="771" width="2" height="11" fill="#00ee00"/><rect x="1023" y="773" width="2" height="3" fill="#00ee00"/><path d="M1028 776L1035 769V782Z" fill="#f00"/><rect x="1074" y="771" width="2" height="5" fill="#00ee00"/><rect x="1077" y="771" width="2" height="5" fill="#00ee00"/><rect x="1080" y="771" width="2" height="3" fill="#00ee00"/><rect x="1228" y="771" width="1" height="33" fill="#00e0ff"/><rect x="1230" y="771" width="2" height="34" fill="#c8c8c8"/><rect x="1233" y="771" width="2" height="30" fill="#c8c8c8"/><rect x="1236" y="771" width="2" height="19" fill="#c8c8c8"/><rect x="1239" y="771" width="2" height="5" fill="#c8c8c8"/><rect x="1330" y="573" width="1" height="46" fill="#00e0ff"/><rect x="1332" y="573" width="2" height="75" fill="#00ee00"/><rect x="1335" y="582" width="2" height="8" fill="#00ee00"/><rect x="1335" y="628" width="2" height="10" fill="#00ee00"/><rect x="1332" y="590" width="2" height="38" fill="#c8c8c8"/><rect x="1335" y="594" width="2" height="31" fill="#c8c8c8"/><rect x="1338" y="601" width="2" height="21" fill="#c8c8c8"/><rect x="1341" y="609" width="2" height="10" fill="#c8c8c8"/><rect x="1332" y="615" width="12" height="1" fill="#ff00ff"/><path d="M1343 625L1351 617V633Z" fill="#ff0000" stroke="#000" stroke-width="1"/><rect x="1360" y="603" width="1" height="35" fill="#00e0ff"/><rect x="1362" y="603" width="2" height="57" fill="#00ee00"/><rect x="1365" y="613" width="2" height="10" fill="#00ee00"/><rect x="1365" y="655" width="2" height="2" fill="#00ee00"/><rect x="1362" y="623" width="2" height="32" fill="#c8c8c8"/><rect x="1365" y="624" width="2" height="29" fill="#c8c8c8"/><rect x="1368" y="626" width="2" height="25" fill="#c8c8c8"/><rect x="1371" y="628" width="2" height="20" fill="#c8c8c8"/><rect x="1374" y="631" width="2" height="14" fill="#c8c8c8"/><rect x="1377" y="634" width="2" height="8" fill="#c8c8c8"/><rect x="1362" y="637" width="18" height="1" fill="#ff00ff"/><path d="M1377 631L1385 623V639Z" fill="#ff0000" stroke="#000" stroke-width="1"/><rect x="1396" y="600" width="1" height="86" fill="#00e0ff"/><rect x="1398" y="600" width="2" height="138" fill="#00ee00"/><rect x="1401" y="600" width="2" height="0" fill="#00ee00"/><rect x="1401" y="735" width="2" height="2" fill="#00ee00"/><rect x="1398" y="601" width="2" height="134" fill="#c8c8c8"/><rect x="1401" y="626" width="2" height="93" fill="#c8c8c8"/><rect x="1404" y="663" width="2" height="34" fill="#c8c8c8"/><rect x="1398" y="684" width="9" height="1" fill="#ff00ff"/><path d="M1408 691L1416 683V699Z" fill="#ff0000" stroke="#000" stroke-width="1"/><rect x="1423" y="624" width="1" height="27" fill="#00e0ff"/><rect x="1425" y="624" width="2" height="43" fill="#00ee00"/><rect x="1428" y="627" width="2" height="3" fill="#00ee00"/><rect x="1428" y="660" width="2" height="4" fill="#00ee00"/><rect x="1425" y="630" width="2" height="30" fill="#c8c8c8"/><rect x="1428" y="631" width="2" height="27" fill="#c8c8c8"/><rect x="1431" y="633" width="2" height="23" fill="#c8c8c8"/><rect x="1434" y="636" width="2" height="18" fill="#c8c8c8"/><rect x="1437" y="638" width="2" height="13" fill="#c8c8c8"/><rect x="1440" y="641" width="2" height="8" fill="#c8c8c8"/><rect x="1425" y="645" width="18" height="1" fill="#ff00ff"/><path d="M1440 650L1448 642V658Z" fill="#ff0000" stroke="#000" stroke-width="1"/><rect x="1456" y="616" width="1" height="42" fill="#00e0ff"/><rect x="1458" y="616" width="2" height="68" fill="#00ee00"/><rect x="1461" y="623" width="2" height="7" fill="#00ee00"/><rect x="1461" y="680" width="2" height="2" fill="#00ee00"/><rect x="1458" y="630" width="2" height="50" fill="#c8c8c8"/><rect x="1461" y="632" width="2" height="45" fill="#c8c8c8"/><rect x="1464" y="636" width="2" height="39" fill="#c8c8c8"/><rect x="1467" y="640" width="2" height="31" fill="#c8c8c8"/><rect x="1470" y="644" width="2" height="22" fill="#c8c8c8"/><rect x="1473" y="649" width="2" height="12" fill="#c8c8c8"/><rect x="1458" y="655" width="18" height="1" fill="#ff00ff"/><path d="M1477 667L1485 659V675Z" fill="#ff0000" stroke="#000" stroke-width="1"/><rect x="1492" y="669" width="1" height="21" fill="#00e0ff"/><rect x="1494" y="669" width="2" height="34" fill="#00ee00"/><rect x="1497" y="670" width="2" height="2" fill="#00ee00"/><rect x="1497" y="700" width="2" height="2" fill="#00ee00"/><rect x="1494" y="672" width="2" height="28" fill="#c8c8c8"/><rect x="1497" y="673" width="2" height="25" fill="#c8c8c8"/><rect x="1500" y="675" width="2" height="22" fill="#c8c8c8"/><rect x="1503" y="677" width="2" height="17" fill="#c8c8c8"/><rect x="1506" y="679" width="2" height="12" fill="#c8c8c8"/><rect x="1509" y="682" width="2" height="7" fill="#c8c8c8"/><rect x="1494" y="685" width="18" height="1" fill="#ff00ff"/><path d="M1510 674L1518 666V682Z" fill="#ff0000" stroke="#000" stroke-width="1"/><rect x="1528" y="629" width="1" height="61" fill="#00e0ff"/><rect x="1530" y="629" width="2" height="98" fill="#00ee00"/><rect x="1533" y="630" width="2" height="2" fill="#00ee00"/><rect x="1533" y="700" width="2" height="14" fill="#00ee00"/><rect x="1530" y="632" width="2" height="68" fill="#c8c8c8"/><rect x="1533" y="634" width="2" height="60" fill="#c8c8c8"/><rect x="1536" y="636" width="2" height="47" fill="#c8c8c8"/><rect x="1539" y="639" width="2" height="33" fill="#c8c8c8"/><rect x="1542" y="642" width="2" height="17" fill="#c8c8c8"/><rect x="1530" y="645" width="15" height="1" fill="#ff00ff"/><path d="M1541 637L1549 629V645Z" fill="#ff0000" stroke="#000" stroke-width="1"/><rect x="1561" y="633" width="1" height="43" fill="#00e0ff"/><rect x="1563" y="633" width="2" height="70" fill="#00ee00"/><rect x="1566" y="636" width="2" height="4" fill="#00ee00"/><rect x="1566" y="695" width="2" height="4" fill="#00ee00"/><rect x="1563" y="640" width="2" height="55" fill="#c8c8c8"/><rect x="1566" y="642" width="2" height="50" fill="#c8c8c8"/><rect x="1569" y="646" width="2" height="42" fill="#c8c8c8"/><rect x="1572" y="650" width="2" height="34" fill="#c8c8c8"/><rect x="1575" y="655" width="2" height="24" fill="#c8c8c8"/><rect x="1578" y="660" width="2" height="14" fill="#c8c8c8"/><rect x="1563" y="667" width="18" height="1" fill="#ff00ff"/><path d="M1577 674L1585 666V682Z" fill="#ff0000" stroke="#000" stroke-width="1"/><rect x="1594" y="633" width="1" height="33" fill="#00e0ff"/><rect x="1596" y="633" width="2" height="54" fill="#00ee00"/><rect x="1599" y="636" width="2" height="4" fill="#00ee00"/><rect x="1599" y="680" width="2" height="4" fill="#00ee00"/><rect x="1596" y="640" width="2" height="40" fill="#c8c8c8"/><rect x="1599" y="642" width="2" height="36" fill="#c8c8c8"/><rect x="1602" y="644" width="2" height="31" fill="#c8c8c8"/><rect x="1605" y="647" width="2" height="25" fill="#c8c8c8"/><rect x="1608" y="651" width="2" height="18" fill="#c8c8c8"/><rect x="1611" y="654" width="2" height="10" fill="#c8c8c8"/><rect x="1596" y="659" width="18" height="1" fill="#ff00ff"/><path d="M1610 651L1618 643V659Z" fill="#ff0000" stroke="#000" stroke-width="1"/><rect x="1634" y="662" width="1" height="20" fill="#00e0ff"/><rect x="1636" y="662" width="2" height="32" fill="#00ee00"/><rect x="1639" y="665" width="2" height="3" fill="#00ee00"/><rect x="1639" y="690" width="2" height="2" fill="#00ee00"/><rect x="1636" y="668" width="2" height="22" fill="#c8c8c8"/><rect x="1639" y="669" width="2" height="19" fill="#c8c8c8"/><rect x="1642" y="672" width="2" height="15" fill="#c8c8c8"/><rect x="1645" y="674" width="2" height="11" fill="#c8c8c8"/><rect x="1648" y="677" width="2" height="6" fill="#c8c8c8"/><rect x="1636" y="680" width="15" height="1" fill="#ff00ff"/><path d="M1646 669L1654 661V677Z" fill="#ff0000" stroke="#000" stroke-width="1"/><rect x="1667" y="649" width="1" height="25" fill="#00e0ff"/><rect x="1669" y="649" width="2" height="41" fill="#00ee00"/><rect x="1672" y="652" width="2" height="3" fill="#00ee00"/><rect x="1672" y="675" width="2" height="8" fill="#00ee00"/><rect x="1669" y="655" width="2" height="20" fill="#c8c8c8"/><rect x="1672" y="656" width="2" height="18" fill="#c8c8c8"/><rect x="1675" y="658" width="2" height="15" fill="#c8c8c8"/><rect x="1678" y="660" width="2" height="12" fill="#c8c8c8"/><rect x="1681" y="662" width="2" height="9" fill="#c8c8c8"/><rect x="1684" y="664" width="2" height="5" fill="#c8c8c8"/><rect x="1669" y="667" width="18" height="1" fill="#ff00ff"/><path d="M1673 686L1681 678V694Z" fill="#ff0000" stroke="#000" stroke-width="1"/><rect x="1702" y="674" width="1" height="33" fill="#00e0ff"/><rect x="1704" y="674" width="2" height="53" fill="#00ee00"/><rect x="1707" y="680" width="2" height="6" fill="#00ee00"/><rect x="1707" y="725" width="2" height="1" fill="#00ee00"/><rect x="1704" y="685" width="2" height="40" fill="#c8c8c8"/><rect x="1707" y="688" width="2" height="35" fill="#c8c8c8"/><rect x="1710" y="693" width="2" height="28" fill="#c8c8c8"/><rect x="1713" y="698" width="2" height="19" fill="#c8c8c8"/><rect x="1716" y="704" width="2" height="10" fill="#c8c8c8"/><rect x="1704" y="710" width="15" height="1" fill="#ff00ff"/><path d="M1711 683L1719 675V691Z" fill="#ff0000" stroke="#000" stroke-width="1"/><rect x="1736" y="561" width="1" height="82" fill="#00e0ff"/><rect x="1738" y="561" width="2" height="132" fill="#00ee00"/><rect x="1741" y="586" width="2" height="24" fill="#00ee00"/><rect x="1741" y="660" width="2" height="16" fill="#00ee00"/><rect x="1738" y="610" width="2" height="50" fill="#c8c8c8"/><rect x="1741" y="612" width="2" height="45" fill="#c8c8c8"/><rect x="1744" y="616" width="2" height="39" fill="#c8c8c8"/><rect x="1747" y="620" width="2" height="31" fill="#c8c8c8"/><rect x="1750" y="625" width="2" height="22" fill="#c8c8c8"/><rect x="1753" y="630" width="2" height="12" fill="#c8c8c8"/><rect x="1738" y="636" width="18" height="1" fill="#ff00ff"/><path d="M1746 680L1754 672V688Z" fill="#ff0000" stroke="#000" stroke-width="1"/><rect x="1768" y="632" width="1" height="29" fill="#00e0ff"/><rect x="1770" y="632" width="2" height="47" fill="#00ee00"/><rect x="1773" y="638" width="2" height="6" fill="#00ee00"/><rect x="1773" y="675" width="2" height="2" fill="#00ee00"/><rect x="1770" y="645" width="2" height="30" fill="#c8c8c8"/><rect x="1773" y="646" width="2" height="27" fill="#c8c8c8"/><rect x="1776" y="649" width="2" height="23" fill="#c8c8c8"/><rect x="1779" y="651" width="2" height="18" fill="#c8c8c8"/><rect x="1782" y="654" width="2" height="13" fill="#c8c8c8"/><rect x="1785" y="657" width="2" height="8" fill="#c8c8c8"/><rect x="1770" y="661" width="18" height="1" fill="#ff00ff"/><path d="M1781 673L1789 665V681Z" fill="#ff0000" stroke="#000" stroke-width="1"/><rect x="1805" y="653" width="1" height="79" fill="#00e0ff"/><rect x="1807" y="653" width="2" height="127" fill="#00ee00"/><rect x="1810" y="676" width="2" height="24" fill="#00ee00"/><rect x="1810" y="770" width="2" height="5" fill="#00ee00"/><rect x="1807" y="700" width="2" height="70" fill="#c8c8c8"/><rect x="1810" y="704" width="2" height="61" fill="#c8c8c8"/><rect x="1813" y="711" width="2" height="49" fill="#c8c8c8"/><rect x="1816" y="718" width="2" height="34" fill="#c8c8c8"/><rect x="1819" y="726" width="2" height="18" fill="#c8c8c8"/><rect x="1807" y="735" width="15" height="1" fill="#ff00ff"/><path d="M1819 765L1827 757V773Z" fill="#ff0000" stroke="#000" stroke-width="1"/></svg>
<div class="a t" style="left:401px;top:180.12px;font-size:11.2px;color:#fff;">F.US.CCEZ14  #19 - Profile Period: 1 Days, TPOs: 1 x 45 min</div>
<div class="a " style="left:716px;top:181px;width:40px;height:13px;background:#fff"></div>
<div class="a t" style="left:717px;top:180.12px;font-size:11.2px;">C=3047</div>
<div class="a t" style="left:760px;top:180.12px;font-size:11.2px;color:#fff;">T=6823</div>
<div class="a " style="left:801px;top:181px;width:36px;height:13px;background:#fff"></div>
<div class="a t" style="left:801px;top:180.12px;font-size:11.2px;">Chg=0</div>
<div class="a " style="left:840px;top:181px;width:44px;height:13px;background:#fff"></div>
<div class="a t" style="left:840px;top:180.12px;font-size:11.2px;">DChg=0</div>
<div class="a t" style="left:887.5px;top:180.04px;font-size:11.44px;color:#fff;">2014-10-24 12:29:57 H=3117 L=3037 O=3106 V=12846 B=0 A=0 0x0 TR:5m 3s BV=7331 AV=5515 DV=0 Time Range Highlight</div>
<div class="a t" style="left:1544.5px;top:180.12px;font-size:11.2px;color:#303030">TR: 0</div>
<div class="a t" style="left:1579px;top:180.07px;font-size:11.34px;color:#fff;">(5:00:00 PM, 7:19:59 AM, No)</div>
<div class="a " style="left:808px;top:178px;width:1px;height:639px;background:#fff"></div>
<div class="a " style="left:392px;top:429px;width:1446px;height:1px;background:#fff"></div>
<div class="a " style="left:1838px;top:178px;width:1px;height:640px;background:#fff"></div>
<div class="a " style="left:392px;top:817px;width:1447px;height:1px;background:#fff"></div>
<div class="a " style="left:1838px;top:207px;width:4px;height:1px;background:#fff"></div>
<div class="a t" style="left:1843px;top:200.39px;font-size:11px;color:#fff;">3400</div>
<div class="a " style="left:1838px;top:238px;width:4px;height:1px;background:#fff"></div>
<div class="a t" style="left:1843px;top:231.95px;font-size:11px;color:#fff;">3380</div>
<div class="a " style="left:1838px;top:270px;width:4px;height:1px;background:#fff"></div>
<div class="a t" style="left:1843px;top:263.51px;font-size:11px;color:#fff;">3360</div>
<div class="a " style="left:1838px;top:301px;width:4px;height:1px;background:#fff"></div>
<div class="a t" style="left:1843px;top:295.07px;font-size:11px;color:#fff;">3340</div>
<div class="a " style="left:1838px;top:333px;width:4px;height:1px;background:#fff"></div>
<div class="a t" style="left:1843px;top:326.63px;font-size:11px;color:#fff;">3320</div>
<div class="a " style="left:1838px;top:364px;width:4px;height:1px;background:#fff"></div>
<div class="a t" style="left:1843px;top:358.19px;font-size:11px;color:#fff;">3300</div>
<div class="a " style="left:1838px;top:396px;width:4px;height:1px;background:#fff"></div>
<div class="a t" style="left:1843px;top:389.75px;font-size:11px;color:#fff;">3280</div>
<div class="a " style="left:1838px;top:428px;width:4px;height:1px;background:#fff"></div>
<div class="a t" style="left:1843px;top:421.31px;font-size:11px;color:#fff;">3260</div>
<div class="a " style="left:1838px;top:459px;width:4px;height:1px;background:#fff"></div>
<div class="a t" style="left:1843px;top:452.87px;font-size:11px;color:#fff;">3240</div>
<div class="a " style="left:1838px;top:491px;width:4px;height:1px;background:#fff"></div>
<div class="a t" style="left:1843px;top:484.43px;font-size:11px;color:#fff;">3220</div>
<div class="a " style="left:1838px;top:522px;width:4px;height:1px;background:#fff"></div>
<div class="a t" style="left:1843px;top:515.99px;font-size:11px;color:#fff;">3200</div>
<div class="a " style="left:1838px;top:554px;width:4px;height:1px;background:#fff"></div>
<div class="a t" style="left:1843px;top:547.55px;font-size:11px;color:#fff;">3180</div>
<div class="a " style="left:1838px;top:585px;width:4px;height:1px;background:#fff"></div>
<div class="a t" style="left:1843px;top:579.11px;font-size:11px;color:#fff;">3160</div>
<div class="a " style="left:1838px;top:617px;width:4px;height:1px;background:#fff"></div>
<div class="a t" style="left:1843px;top:610.67px;font-size:11px;color:#fff;">3140</div>
<div class="a " style="left:1838px;top:649px;width:4px;height:1px;background:#fff"></div>
<div class="a t" style="left:1843px;top:642.23px;font-size:11px;color:#fff;">3120</div>
<div class="a " style="left:1838px;top:680px;width:4px;height:1px;background:#fff"></div>
<div class="a t" style="left:1843px;top:673.79px;font-size:11px;color:#fff;">3100</div>
<div class="a " style="left:1838px;top:712px;width:4px;height:1px;background:#fff"></div>
<div class="a t" style="left:1843px;top:705.35px;font-size:11px;color:#fff;">3080</div>
<div class="a " style="left:1838px;top:743px;width:4px;height:1px;background:#fff"></div>
<div class="a t" style="left:1843px;top:736.91px;font-size:11px;color:#fff;">3060</div>
<div class="a " style="left:1838px;top:775px;width:4px;height:1px;background:#fff"></div>
<div class="a t" style="left:1843px;top:768.47px;font-size:11px;color:#fff;">3040</div>
<div class="a " style="left:1838px;top:806px;width:4px;height:1px;background:#fff"></div>
<div class="a t" style="left:1843px;top:800.03px;font-size:11px;color:#fff;">3020</div>
<div class="a " style="left:1842px;top:422px;width:22px;height:14px;background:#fff"></div>
<div class="a t" style="left:1843px;top:422.69px;font-size:11px;">3258</div>
<div class="a " style="left:1842px;top:758px;width:22px;height:14px;background:#fff"></div>
<div class="a t" style="left:1843px;top:758.69px;font-size:11px;">3047</div>
<div class="a " style="left:430px;top:817px;width:1px;height:20px;background:#fff"></div>
<div class="a " style="left:490px;top:817px;width:1px;height:20px;background:#fff"></div>
<div class="a " style="left:558px;top:817px;width:1px;height:20px;background:#fff"></div>
<div class="a " style="left:621px;top:817px;width:1px;height:20px;background:#fff"></div>
<div class="a " style="left:688px;top:817px;width:1px;height:20px;background:#fff"></div>
<div class="a " style="left:751px;top:817px;width:1px;height:20px;background:#fff"></div>
<div class="a " style="left:845px;top:817px;width:1px;height:20px;background:#fff"></div>
<div class="a " style="left:916px;top:817px;width:1px;height:20px;background:#fff"></div>
<div class="a " style="left:982px;top:817px;width:1px;height:20px;background:#fff"></div>
<div class="a " style="left:1072px;top:817px;width:1px;height:20px;background:#fff"></div>
<div class="a " style="left:1132px;top:817px;width:1px;height:20px;background:#fff"></div>
<div class="a " style="left:1198px;top:817px;width:1px;height:20px;background:#fff"></div>
<div class="a " style="left:1291px;top:817px;width:1px;height:20px;background:#fff"></div>
<div class="a " style="left:1396px;top:817px;width:1px;height:20px;background:#fff"></div>
<div class="a " style="left:1492px;top:817px;width:1px;height:20px;background:#fff"></div>
<div class="a " style="left:1594px;top:817px;width:1px;height:20px;background:#fff"></div>
<div class="a " style="left:1666px;top:817px;width:1px;height:20px;background:#fff"></div>
<div class="a " style="left:1735px;top:817px;width:1px;height:20px;background:#fff"></div>
<div class="a " style="left:1805px;top:817px;width:1px;height:20px;background:#fff"></div>
<div class="a " style="left:431px;top:821px;width:54px;height:15px;background:#fff;overflow:hidden"><div class="a t" style="left:1px;top:0px;font-size:11px;line-height:15px">9-25  7:20</div></div>
<div class="a " style="left:491px;top:821px;width:54px;height:15px;background:#fff;overflow:hidden"><div class="a t" style="left:1px;top:0px;font-size:11px;line-height:15px">9-26  7:20</div></div>
<div class="a " style="left:560px;top:821px;width:54px;height:15px;background:#fff;overflow:hidden"><div class="a t" style="left:1px;top:0px;font-size:11px;line-height:15px">9-29  7:20</div></div>
<div class="a " style="left:623px;top:821px;width:53px;height:15px;background:#fff;overflow:hidden"><div class="a t" style="left:1px;top:0px;font-size:11px;line-height:15px">9-30  7:20</div></div>
<div class="a " style="left:690px;top:821px;width:53px;height:15px;background:#fff;overflow:hidden"><div class="a t" style="left:1px;top:0px;font-size:11px;line-height:15px">10-1  7:20</div></div>
<div class="a " style="left:752px;top:821px;width:153px;height:15px;background:#fff;overflow:hidden"><div class="a t" style="left:1px;top:0px;font-size:11px;line-height:15px">2014-10-03  07:20:00  5  17:00</div></div>
<div class="a " style="left:918px;top:821px;width:59px;height:15px;background:#fff;overflow:hidden"><div class="a t" style="left:1px;top:0px;font-size:11px;line-height:15px">10-6  17:00</div></div>
<div class="a " style="left:983px;top:821px;width:60px;height:15px;background:#fff;overflow:hidden"><div class="a t" style="left:1px;top:0px;font-size:11px;line-height:15px">10-7  17:00</div></div>
<div class="a " style="left:1074px;top:821px;width:53px;height:15px;background:#fff;overflow:hidden"><div class="a t" style="left:1px;top:0px;font-size:11px;line-height:15px">10-9  7:20</div></div>
<div class="a " style="left:1134px;top:821px;width:59px;height:15px;background:#fff;overflow:hidden"><div class="a t" style="left:1px;top:0px;font-size:11px;line-height:15px">10-10  7:20</div></div>
<div class="a " style="left:1200px;top:821px;width:59px;height:15px;background:#fff;overflow:hidden"><div class="a t" style="left:1px;top:0px;font-size:11px;line-height:15px">10-13  7:20</div></div>
<div class="a " style="left:1293px;top:821px;width:65px;height:15px;background:#fff;overflow:hidden"><div class="a t" style="left:1px;top:0px;font-size:11px;line-height:15px">10-14  17:00</div></div>
<div class="a " style="left:1399px;top:821px;width:58px;height:15px;background:#fff;overflow:hidden"><div class="a t" style="left:1px;top:0px;font-size:11px;line-height:15px">10-16  7:20</div></div>
<div class="a " style="left:1494px;top:821px;width:65px;height:15px;background:#fff;overflow:hidden"><div class="a t" style="left:1px;top:0px;font-size:11px;line-height:15px">10-19  17:00</div></div>
<div class="a " style="left:1597px;top:821px;width:58px;height:15px;background:#fff;overflow:hidden"><div class="a t" style="left:1px;top:0px;font-size:11px;line-height:15px">10-21  7:20</div></div>
<div class="a " style="left:1669px;top:821px;width:58px;height:15px;background:#fff;overflow:hidden"><div class="a t" style="left:1px;top:0px;font-size:11px;line-height:15px">10-22  7:20</div></div>
<div class="a " style="left:1738px;top:821px;width:58px;height:15px;background:#fff;overflow:hidden"><div class="a t" style="left:1px;top:0px;font-size:11px;line-height:15px">10-23  7:20</div></div>
<div class="a " style="left:1806px;top:821px;width:58px;height:15px;background:#fff;overflow:hidden"><div class="a t" style="left:1px;top:0px;font-size:11px;line-height:15px">10-24  7:20</div></div>
<div class="a " style="left:1847px;top:821px;width:17px;height:15px;background:#00c000"><div class="a t" style="left:2px;top:0;font-size:11px;line-height:15px;color:#fff">2 E</div></div>
<div class="a " style="left:392px;top:838px;width:1472px;height:17px;background:#f0f0f0"></div>
<div class="a" style="left:398px;top:842px;width:0;height:0;border-top:4px solid transparent;border-bottom:4px solid transparent;border-right:4px solid #606060"></div>
<div class="a " style="left:1843px;top:840px;width:16px;height:15px;background:linear-gradient(#f4f4f4,#dcdcdc);border:1px solid #a8a8a8;border-radius:2px"></div>
<div class="a " style="left:383px;top:855px;width:1481px;height:7px;background:#d7e4f2"></div>
<div class="a " style="left:383px;top:862px;width:1481px;height:3px;background:#3a3a3a"></div>
<div class="a " style="left:557px;top:267px;width:773px;height:505px;background:#dce7f3;border:1px solid #3c4048;border-radius:5px 5px 0 0"></div>
<div class="a " style="left:558px;top:268px;width:771px;height:503px;background:#f0f0f0;border:1px solid #e8eef6;border-top:none;border-radius:4px 4px 0 0"></div>
<div class="a " style="left:558px;top:268px;width:771px;height:23px;background:linear-gradient(#b9cadb,#dae5f3);border-radius:4px 4px 0 0"></div>
<div class="a t" style="left:563.5px;top:273.07px;font-size:11.35px;color:#34404e">Chart Settings - F.US.CCEZ14  #19 - Profile Period: 1 Days, TPOs: 1 x 45 min</div>
<div class="a " style="left:1294px;top:271px;width:31px;height:17px;border:1px solid #8494aa;border-radius:3px;background:linear-gradient(#e4ecf6,#c9d7e7)"></div>
<svg class="a" style="left:1303px;top:274px" width="13" height="11"><path d="M2.5 2L10.5 9M10.5 2L2.5 9" stroke="#454f5c" stroke-width="3.6" stroke-linecap="round"/><path d="M2.5 2L10.5 9M10.5 2L2.5 9" stroke="#f4f4f4" stroke-width="1.9" stroke-linecap="round"/></svg>
<div class="a " style="left:572px;top:321px;width:743px;height:409px;border:1px solid;border-color:#fff #696969 #696969 #fff;box-shadow:inset -1px -1px 0 #a0a0a0"></div>
<div class="a " style="left:661px;top:302px;width:111px;height:20px;background:#f0f0f0;border:1px solid;border-bottom:none;border-color:#fff #696969 #fff #fff;border-radius:2px 2px 0 0;box-shadow:inset -1px 0 0 #a0a0a0"></div><div class="a t" style="left:666px;top:305.34px;font-size:12px;">Advanced Settings</div>
<div class="a " style="left:772px;top:302px;width:122px;height:20px;background:#f0f0f0;border:1px solid;border-bottom:none;border-color:#fff #696969 #fff #fff;border-radius:2px 2px 0 0;box-shadow:inset -1px 0 0 #a0a0a0"></div><div class="a t" style="left:778px;top:305.34px;font-size:12px;">Advanced Settings 2</div>
<div class="a " style="left:894px;top:302px;width:42px;height:20px;background:#f0f0f0;border:1px solid;border-bottom:none;border-color:#fff #696969 #fff #fff;border-radius:2px 2px 0 0;box-shadow:inset -1px 0 0 #a0a0a0"></div><div class="a t" style="left:900px;top:305.34px;font-size:12px;">Alerts</div>
<div class="a " style="left:572px;top:299px;width:90px;height:24px;background:#f0f0f0;border:1px solid;border-bottom:none;border-color:#fff #696969 #fff #fff;border-radius:2px 2px 0 0;box-shadow:inset -1px 0 0 #a0a0a0"></div><div class="a t" style="left:579.5px;top:303.34px;font-size:12px;">Main Settings</div>
<div class="a t" style="left:585px;top:337.84px;font-size:12px;">Date Range In File (yyyy-mm-dd):</div>
<div class="a " style="left:608px;top:355px;width:239px;height:22px;background:#f0f0f0;border:1px solid;border-color:#a0a0a0 #fff #fff #a0a0a0"></div>
<div class="a t" style="left:609px;top:358.84px;font-size:12px;">2014-07-01 to 2014-10-24</div>
<div class="a " style="left:585px;top:391px;width:262px;height:62px;border:1px solid;border-color:#a0a0a0 #fff #fff #a0a0a0;box-shadow:inset -1px -1px 0 #a0a0a0, inset 1px 1px 0 #fff"></div>
<div class="a " style="left:594px;top:384px;width:191px;height:14px;background:#f0f0f0"></div>
<svg class="a" style="left:595px;top:386px" width="12" height="12"><path d="M10.2 1.8A6 6 0 0 0 1.8 10.2" stroke="#a0a0a0" stroke-width="1.2" fill="none"/><path d="M1.8 10.2A6 6 0 0 0 10.2 1.8" stroke="#ffffff" stroke-width="1.2" fill="none"/><path d="M9.2 2.8A4.6 4.6 0 0 0 2.8 9.2" stroke="#696969" stroke-width="1.2" fill="none"/><path d="M2.8 9.2A4.6 4.6 0 0 0 9.2 2.8" stroke="#e3e3e3" stroke-width="1.2" fill="none"/><circle cx="6" cy="6" r="3.9" fill="#fff"/><circle cx="6" cy="6" r="2" fill="#000"/></svg>
<div class="a t" style="left:612px;top:385.84px;font-size:12px;">Use Number Of Days To Load</div>
<div class="a t" style="left:629.5px;top:407.84px;font-size:12px;">Days To Load:</div>
<div class="a " style="left:713px;top:402px;width:83px;height:22px;background:#fff;border:1px solid;border-color:#a0a0a0 #fff #fff #a0a0a0;box-shadow:inset 1px 1px 0 #696969, inset -1px -1px 0 #e3e3e3"></div><div class="a t" style="left:717px;top:406.84px;font-size:12px;">1000</div><div class="a " style="left:778px;top:404px;width:16px;height:9px;background:#f0f0f0;border:1px solid;border-color:#fff #a0a0a0 #a0a0a0 #fff"></div><div class="a " style="left:778px;top:413px;width:16px;height:9px;background:#f0f0f0;border:1px solid;border-color:#fff #a0a0a0 #a0a0a0 #fff"></div><div class="a" style="left:784px;top:408px;width:0;height:0;border-left:2px solid transparent;border-right:2px solid transparent;border-bottom:3px solid #000"></div><div class="a" style="left:784px;top:416px;width:0;height:0;border-left:2px solid transparent;border-right:2px solid transparent;border-top:3px solid #000"></div>
<div class="a " style="left:608px;top:429px;width:12px;height:12px;background:#fff;border:1px solid;border-color:#a0a0a0 #fff #fff #a0a0a0;box-shadow:inset 1px 1px 0 #696969, inset -1px -1px 0 #e3e3e3"></div>
<div class="a t" style="left:626px;top:429.84px;font-size:12px;">Adjust Proportional With Bar Period</div>
<div class="a " style="left:585px;top:465px;width:262px;height:45px;border:1px solid;border-color:#a0a0a0 #fff #fff #a0a0a0;box-shadow:inset -1px -1px 0 #a0a0a0, inset 1px 1px 0 #fff"></div>
<div class="a " style="left:594px;top:459px;width:119px;height:14px;background:#f0f0f0"></div>
<svg class="a" style="left:595px;top:461px" width="12" height="12"><path d="M10.2 1.8A6 6 0 0 0 1.8 10.2" stroke="#a0a0a0" stroke-width="1.2" fill="none"/><path d="M1.8 10.2A6 6 0 0 0 10.2 1.8" stroke="#ffffff" stroke-width="1.2" fill="none"/><path d="M9.2 2.8A4.6 4.6 0 0 0 2.8 9.2" stroke="#696969" stroke-width="1.2" fill="none"/><path d="M2.8 9.2A4.6 4.6 0 0 0 9.2 2.8" stroke="#e3e3e3" stroke-width="1.2" fill="none"/><circle cx="6" cy="6" r="3.9" fill="#fff"/></svg>
<div class="a t" style="left:612px;top:460.84px;font-size:12px;">Use Date Range</div>
<div class="a t" style="left:610px;top:482.84px;font-size:12px;color:#8d8d8d;text-shadow:1px 1px 0 #fff;">From:</div>
<div class="a " style="left:645px;top:477px;width:80px;height:22px;background:#f0f0f0;border:1px solid;border-color:#a0a0a0 #fff #fff #a0a0a0;box-shadow:inset 1px 1px 0 #696969, inset -1px -1px 0 #e3e3e3"></div>
<div class="a t" style="left:734px;top:482.84px;font-size:12px;color:#8d8d8d;text-shadow:1px 1px 0 #fff;">To:</div>
<div class="a " style="left:753px;top:477px;width:80px;height:22px;background:#f0f0f0;border:1px solid;border-color:#a0a0a0 #fff #fff #a0a0a0;box-shadow:inset 1px 1px 0 #696969, inset -1px -1px 0 #e3e3e3"></div>
<div class="a t" style="left:585px;top:521.84px;font-size:12px;width:160px;text-align:right;">Price Display Format:</div>
<div class="a " style="left:753px;top:519px;width:94px;height:21px;background:#fff;border:1px solid;border-color:#a0a0a0 #fff #fff #a0a0a0;box-shadow:inset 1px 1px 0 #696969, inset -1px -1px 0 #e3e3e3"></div><div class="a " style="left:829px;top:521px;width:16px;height:17px;background:#f0f0f0;border:1px solid;border-color:#f0f0f0 #696969 #696969 #f0f0f0;box-shadow:inset -1px -1px 0 #a0a0a0, inset 1px 1px 0 #fff"></div><div class="a" style="left:833px;top:527px;width:0;height:0;border-left:4px solid transparent;border-right:4px solid transparent;border-top:5px solid #000"></div><div class="a t" style="left:757px;top:523.34px;font-size:12px;">1</div>
<div class="a t" style="left:585px;top:548.34px;font-size:12px;width:160px;text-align:right;">Tick Size:</div>
<div class="a " style="left:753px;top:545px;width:94px;height:21px;background:#fff;border:1px solid;border-color:#a0a0a0 #fff #fff #a0a0a0;box-shadow:inset 1px 1px 0 #696969, inset -1px -1px 0 #e3e3e3"></div>
<div class="a t" style="left:757px;top:548.84px;font-size:12px;">1.000000</div>
<div class="a t" style="left:585px;top:574.84px;font-size:12px;width:162px;text-align:right;">Volume at Price Multiplier:</div>
<div class="a " style="left:753px;top:572px;width:94px;height:21px;background:#fff;border:1px solid;border-color:#a0a0a0 #fff #fff #a0a0a0;box-shadow:inset 1px 1px 0 #696969, inset -1px -1px 0 #e3e3e3"></div><div class="a " style="left:829px;top:574px;width:16px;height:17px;background:#f0f0f0;border:1px solid;border-color:#f0f0f0 #696969 #696969 #f0f0f0;box-shadow:inset -1px -1px 0 #a0a0a0, inset 1px 1px 0 #fff"></div><div class="a" style="left:833px;top:580px;width:0;height:0;border-left:4px solid transparent;border-right:4px solid transparent;border-top:5px solid #000"></div><div class="a t" style="left:757px;top:576.34px;font-size:12px;">1</div>
<div class="a t" style="left:585px;top:598.84px;font-size:12px;">Symbol:</div>
<div class="a " style="left:608px;top:614px;width:175px;height:22px;background:#fff;border:1px solid;border-color:#a0a0a0 #fff #fff #a0a0a0;box-shadow:inset 1px 1px 0 #696969, inset -1px -1px 0 #e3e3e3"></div>
<div class="a t" style="left:612px;top:618.84px;font-size:12px;">F.US.CCEZ14</div>
<div class="a " style="left:795px;top:614px;width:53px;height:23px;background:#f0f0f0;border:1px solid;border-color:#fff #696969 #696969 #fff;box-shadow:inset -1px -1px 0 #a0a0a0, inset 1px 1px 0 #f0f0f0"></div><div class="a t" style="left:795px;top:618.84px;font-size:12px;width:53px;text-align:center;">Find</div>
<div class="a t" style="left:585px;top:645.84px;font-size:12px;">Trade and Current Quote Symbol:</div>
<div class="a " style="left:608px;top:661px;width:175px;height:22px;background:#fff;border:1px solid;border-color:#a0a0a0 #fff #fff #a0a0a0;box-shadow:inset 1px 1px 0 #696969, inset -1px -1px 0 #e3e3e3"></div>
<div class="a " style="left:795px;top:661px;width:53px;height:23px;background:#f0f0f0;border:1px solid;border-color:#fff #696969 #696969 #fff;box-shadow:inset -1px -1px 0 #a0a0a0, inset 1px 1px 0 #f0f0f0"></div><div class="a t" style="left:795px;top:665.84px;font-size:12px;width:53px;text-align:center;">Find</div>
<div class="a " style="left:585px;top:696px;width:12px;height:12px;background:#fff;border:1px solid;border-color:#a0a0a0 #fff #fff #a0a0a0;box-shadow:inset 1px 1px 0 #696969, inset -1px -1px 0 #e3e3e3"></div><svg class="a" style="left:587px;top:698px" width="8" height="8"><path d="M1 3.5L3 5.5L7 1.5" stroke="#000" stroke-width="2" fill="none"/></svg>
<div class="a t" style="left:603px;top:694.84px;font-size:12px;">Automatically Rollover Futures Symbol</div>
<div class="a " style="left:862px;top:337px;width:240px;height:21px;background:#fff;border:1px solid;border-color:#a0a0a0 #fff #fff #a0a0a0;box-shadow:inset 1px 1px 0 #696969, inset -1px -1px 0 #e3e3e3"></div><div class="a " style="left:1084px;top:339px;width:16px;height:17px;background:#f0f0f0;border:1px solid;border-color:#f0f0f0 #696969 #696969 #f0f0f0;box-shadow:inset -1px -1px 0 #a0a0a0, inset 1px 1px 0 #fff"></div><div class="a" style="left:1088px;top:345px;width:0;height:0;border-left:4px solid transparent;border-right:4px solid transparent;border-top:5px solid #000"></div><div class="a t" style="left:866px;top:341.34px;font-size:12px;">Intraday Chart</div>
<div class="a " style="left:862px;top:365px;width:241px;height:124px;border:1px solid;border-color:#a0a0a0 #fff #fff #a0a0a0;box-shadow:inset -1px -1px 0 #a0a0a0, inset 1px 1px 0 #fff"></div>
<div class="a " style="left:868px;top:358px;width:144px;height:14px;background:#f0f0f0"></div>
<div class="a t" style="left:871px;top:358.84px;font-size:12px;">Intraday Chart Bar Period:</div>
<div class="a t" style="left:876.5px;top:378.34px;font-size:12px;">Bar Period</div>
<div class="a " style="left:876px;top:397px;width:213px;height:21px;background:#fff;border:1px solid;border-color:#a0a0a0 #fff #fff #a0a0a0;box-shadow:inset 1px 1px 0 #696969, inset -1px -1px 0 #e3e3e3"></div><div class="a " style="left:1071px;top:399px;width:16px;height:17px;background:#f0f0f0;border:1px solid;border-color:#f0f0f0 #696969 #696969 #f0f0f0;box-shadow:inset -1px -1px 0 #a0a0a0, inset 1px 1px 0 #fff"></div><div class="a" style="left:1075px;top:405px;width:0;height:0;border-left:4px solid transparent;border-right:4px solid transparent;border-top:5px solid #000"></div><div class="a t" style="left:880px;top:401.34px;font-size:12px;">Days-Mins-Secs Per Bar</div>
<div class="a " style="left:876px;top:422px;width:109px;height:22px;background:#fff;border:1px solid;border-color:#a0a0a0 #fff #fff #a0a0a0;box-shadow:inset 1px 1px 0 #696969, inset -1px -1px 0 #e3e3e3"></div>
<div class="a t" style="left:879px;top:426.84px;font-size:12px;">0-1-0</div>
<div class="a " style="left:876px;top:451px;width:12px;height:12px;background:#f0f0f0;border:1px solid;border-color:#a0a0a0 #fff #fff #a0a0a0;box-shadow:inset 1px 1px 0 #696969, inset -1px -1px 0 #e3e3e3"></div>
<div class="a t" style="left:894.5px;top:449.84px;font-size:12px;color:#8d8d8d;text-shadow:1px 1px 0 #fff;">Fill Session Gap</div>
<div class="a " style="left:876px;top:470px;width:12px;height:12px;background:#f0f0f0;border:1px solid;border-color:#a0a0a0 #fff #fff #a0a0a0;box-shadow:inset 1px 1px 0 #696969, inset -1px -1px 0 #e3e3e3"></div>
<div class="a t" style="left:894.5px;top:469.84px;font-size:12px;color:#8d8d8d;text-shadow:1px 1px 0 #fff;">New Bar When Exceeded</div>
<div class="a " style="left:862px;top:500px;width:241px;height:179px;border:1px solid;border-color:#a0a0a0 #fff #fff #a0a0a0;box-shadow:inset -1px -1px 0 #a0a0a0, inset 1px 1px 0 #fff"></div>
<div class="a " style="left:868px;top:493px;width:161px;height:14px;background:#f0f0f0"></div>
<div class="a t" style="left:871px;top:493.34px;font-size:12px;">Session Times (HH:MM:SS):</div>
<div class="a t" style="left:878px;top:513.84px;font-size:12px;">Start Time:</div>
<div class="a " style="left:976px;top:512px;width:116px;height:21px;background:#fff;border:1px solid;border-color:#a0a0a0 #fff #fff #a0a0a0;box-shadow:inset 1px 1px 0 #696969, inset -1px -1px 0 #e3e3e3"></div><div class="a t" style="left:980px;top:516.34px;font-size:12px;">07:20:00</div><div class="a " style="left:1074px;top:514px;width:16px;height:8px;background:#f0f0f0;border:1px solid;border-color:#fff #a0a0a0 #a0a0a0 #fff"></div><div class="a " style="left:1074px;top:522px;width:16px;height:9px;background:#f0f0f0;border:1px solid;border-color:#fff #a0a0a0 #a0a0a0 #fff"></div><div class="a" style="left:1080px;top:518px;width:0;height:0;border-left:2px solid transparent;border-right:2px solid transparent;border-bottom:3px solid #000"></div><div class="a" style="left:1080px;top:525px;width:0;height:0;border-left:2px solid transparent;border-right:2px solid transparent;border-top:3px solid #000"></div>
<div class="a t" style="left:878px;top:540.84px;font-size:12px;">End Time:</div>
<div class="a " style="left:976px;top:538px;width:116px;height:21px;background:#fff;border:1px solid;border-color:#a0a0a0 #fff #fff #a0a0a0;box-shadow:inset 1px 1px 0 #696969, inset -1px -1px 0 #e3e3e3"></div><div class="a t" style="left:980px;top:542.34px;font-size:12px;">16:59:59</div><div class="a " style="left:1074px;top:540px;width:16px;height:8px;background:#f0f0f0;border:1px solid;border-color:#fff #a0a0a0 #a0a0a0 #fff"></div><div class="a " style="left:1074px;top:548px;width:16px;height:9px;background:#f0f0f0;border:1px solid;border-color:#fff #a0a0a0 #a0a0a0 #fff"></div><div class="a" style="left:1080px;top:544px;width:0;height:0;border-left:2px solid transparent;border-right:2px solid transparent;border-bottom:3px solid #000"></div><div class="a" style="left:1080px;top:551px;width:0;height:0;border-left:2px solid transparent;border-right:2px solid transparent;border-top:3px solid #000"></div>
<div class="a " style="left:878px;top:565px;width:12px;height:12px;background:#fff;border:1px solid;border-color:#a0a0a0 #fff #fff #a0a0a0;box-shadow:inset 1px 1px 0 #696969, inset -1px -1px 0 #e3e3e3"></div><svg class="a" style="left:880px;top:567px" width="8" height="8"><path d="M1 3.5L3 5.5L7 1.5" stroke="#000" stroke-width="2" fill="none"/></svg>
<div class="a t" style="left:896.5px;top:564.84px;font-size:12px;">Use Evening Session</div>
<div class="a t" style="left:878px;top:587.84px;font-size:12px;">Evening Start:</div>
<div class="a " style="left:976px;top:583px;width:116px;height:21px;background:#fff;border:1px solid;border-color:#a0a0a0 #fff #fff #a0a0a0;box-shadow:inset 1px 1px 0 #696969, inset -1px -1px 0 #e3e3e3"></div><div class="a t" style="left:980px;top:587.34px;font-size:12px;">17:00:00</div><div class="a " style="left:1074px;top:585px;width:16px;height:8px;background:#f0f0f0;border:1px solid;border-color:#fff #a0a0a0 #a0a0a0 #fff"></div><div class="a " style="left:1074px;top:593px;width:16px;height:9px;background:#f0f0f0;border:1px solid;border-color:#fff #a0a0a0 #a0a0a0 #fff"></div><div class="a" style="left:1080px;top:589px;width:0;height:0;border-left:2px solid transparent;border-right:2px solid transparent;border-bottom:3px solid #000"></div><div class="a" style="left:1080px;top:596px;width:0;height:0;border-left:2px solid transparent;border-right:2px solid transparent;border-top:3px solid #000"></div>
<div class="a t" style="left:878px;top:613.84px;font-size:12px;">Evening End:</div>
<div class="a " style="left:976px;top:609px;width:116px;height:21px;background:#fff;border:1px solid;border-color:#a0a0a0 #fff #fff #a0a0a0;box-shadow:inset 1px 1px 0 #696969, inset -1px -1px 0 #e3e3e3"></div><div class="a t" style="left:980px;top:613.34px;font-size:12px;">07:19:59</div><div class="a " style="left:1074px;top:611px;width:16px;height:8px;background:#f0f0f0;border:1px solid;border-color:#fff #a0a0a0 #a0a0a0 #fff"></div><div class="a " style="left:1074px;top:619px;width:16px;height:9px;background:#f0f0f0;border:1px solid;border-color:#fff #a0a0a0 #a0a0a0 #fff"></div><div class="a" style="left:1080px;top:615px;width:0;height:0;border-left:2px solid transparent;border-right:2px solid transparent;border-bottom:3px solid #000"></div><div class="a" style="left:1080px;top:622px;width:0;height:0;border-left:2px solid transparent;border-right:2px solid transparent;border-top:3px solid #000"></div>
<div class="a " style="left:878px;top:638px;width:12px;height:12px;background:#fff;border:1px solid;border-color:#a0a0a0 #fff #fff #a0a0a0;box-shadow:inset 1px 1px 0 #696969, inset -1px -1px 0 #e3e3e3"></div><svg class="a" style="left:880px;top:640px" width="8" height="8"><path d="M1 3.5L3 5.5L7 1.5" stroke="#000" stroke-width="2" fill="none"/></svg>
<div class="a t" style="left:896.5px;top:637.84px;font-size:12px;">New Bar At Session Start</div>
<div class="a " style="left:878px;top:658px;width:12px;height:12px;background:#fff;border:1px solid;border-color:#a0a0a0 #fff #fff #a0a0a0;box-shadow:inset 1px 1px 0 #696969, inset -1px -1px 0 #e3e3e3"></div><svg class="a" style="left:880px;top:660px" width="8" height="8"><path d="M1 3.5L3 5.5L7 1.5" stroke="#000" stroke-width="2" fill="none"/></svg>
<div class="a t" style="left:896.5px;top:658.84px;font-size:12px;">Load Weekend Data</div>
<div class="a " style="left:890px;top:696px;width:12px;height:12px;background:#fff;border:1px solid;border-color:#a0a0a0 #fff #fff #a0a0a0;box-shadow:inset 1px 1px 0 #696969, inset -1px -1px 0 #e3e3e3"></div>
<div class="a t" style="left:908.5px;top:694.84px;font-size:12px;">Save Days to Load, Intraday Bar Period, Graph Draw Type as Default</div>
<div class="a " style="left:1112px;top:336px;width:192px;height:116px;border:1px solid;border-color:#a0a0a0 #fff #fff #a0a0a0;box-shadow:inset -1px -1px 0 #a0a0a0, inset 1px 1px 0 #fff"></div>
<div class="a " style="left:1118px;top:329px;width:142px;height:14px;background:#f0f0f0"></div>
<div class="a t" style="left:1121px;top:330.84px;font-size:12px;">Historical Chart Bar Period:</div>
<svg class="a" style="left:1131px;top:352px" width="12" height="12"><path d="M10.2 1.8A6 6 0 0 0 1.8 10.2" stroke="#a0a0a0" stroke-width="1.2" fill="none"/><path d="M1.8 10.2A6 6 0 0 0 10.2 1.8" stroke="#ffffff" stroke-width="1.2" fill="none"/><path d="M9.2 2.8A4.6 4.6 0 0 0 2.8 9.2" stroke="#696969" stroke-width="1.2" fill="none"/><path d="M2.8 9.2A4.6 4.6 0 0 0 9.2 2.8" stroke="#e3e3e3" stroke-width="1.2" fill="none"/><circle cx="6" cy="6" r="3.9" fill="#f0f0f0"/><circle cx="6" cy="6" r="2" fill="#a0a0a0"/></svg>
<div class="a t" style="left:1148.5px;top:351.84px;font-size:12px;color:#8d8d8d;text-shadow:1px 1px 0 #fff;">Days:</div>
<svg class="a" style="left:1131px;top:371px" width="12" height="12"><path d="M10.2 1.8A6 6 0 0 0 1.8 10.2" stroke="#a0a0a0" stroke-width="1.2" fill="none"/><path d="M1.8 10.2A6 6 0 0 0 10.2 1.8" stroke="#ffffff" stroke-width="1.2" fill="none"/><path d="M9.2 2.8A4.6 4.6 0 0 0 2.8 9.2" stroke="#696969" stroke-width="1.2" fill="none"/><path d="M2.8 9.2A4.6 4.6 0 0 0 9.2 2.8" stroke="#e3e3e3" stroke-width="1.2" fill="none"/><circle cx="6" cy="6" r="3.9" fill="#f0f0f0"/></svg>
<div class="a t" style="left:1148.5px;top:370.84px;font-size:12px;color:#8d8d8d;text-shadow:1px 1px 0 #fff;">Weekly</div>
<svg class="a" style="left:1131px;top:390px" width="12" height="12"><path d="M10.2 1.8A6 6 0 0 0 1.8 10.2" stroke="#a0a0a0" stroke-width="1.2" fill="none"/><path d="M1.8 10.2A6 6 0 0 0 10.2 1.8" stroke="#ffffff" stroke-width="1.2" fill="none"/><path d="M9.2 2.8A4.6 4.6 0 0 0 2.8 9.2" stroke="#696969" stroke-width="1.2" fill="none"/><path d="M2.8 9.2A4.6 4.6 0 0 0 9.2 2.8" stroke="#e3e3e3" stroke-width="1.2" fill="none"/><circle cx="6" cy="6" r="3.9" fill="#f0f0f0"/></svg>
<div class="a t" style="left:1148.5px;top:389.84px;font-size:12px;color:#8d8d8d;text-shadow:1px 1px 0 #fff;">Monthly</div>
<svg class="a" style="left:1131px;top:409px" width="12" height="12"><path d="M10.2 1.8A6 6 0 0 0 1.8 10.2" stroke="#a0a0a0" stroke-width="1.2" fill="none"/><path d="M1.8 10.2A6 6 0 0 0 10.2 1.8" stroke="#ffffff" stroke-width="1.2" fill="none"/><path d="M9.2 2.8A4.6 4.6 0 0 0 2.8 9.2" stroke="#696969" stroke-width="1.2" fill="none"/><path d="M2.8 9.2A4.6 4.6 0 0 0 9.2 2.8" stroke="#e3e3e3" stroke-width="1.2" fill="none"/><circle cx="6" cy="6" r="3.9" fill="#f0f0f0"/></svg>
<div class="a t" style="left:1148.5px;top:408.84px;font-size:12px;color:#8d8d8d;text-shadow:1px 1px 0 #fff;">Quarterly</div>
<svg class="a" style="left:1131px;top:428px" width="12" height="12"><path d="M10.2 1.8A6 6 0 0 0 1.8 10.2" stroke="#a0a0a0" stroke-width="1.2" fill="none"/><path d="M1.8 10.2A6 6 0 0 0 10.2 1.8" stroke="#ffffff" stroke-width="1.2" fill="none"/><path d="M9.2 2.8A4.6 4.6 0 0 0 2.8 9.2" stroke="#696969" stroke-width="1.2" fill="none"/><path d="M2.8 9.2A4.6 4.6 0 0 0 9.2 2.8" stroke="#e3e3e3" stroke-width="1.2" fill="none"/><circle cx="6" cy="6" r="3.9" fill="#f0f0f0"/></svg>
<div class="a t" style="left:1148.5px;top:427.84px;font-size:12px;color:#8d8d8d;text-shadow:1px 1px 0 #fff;">Yearly</div>
<div class="a " style="left:1203px;top:349px;width:84px;height:22px;background:#f0f0f0;border:1px solid;border-color:#a0a0a0 #fff #fff #a0a0a0;box-shadow:inset 1px 1px 0 #696969, inset -1px -1px 0 #e3e3e3"></div>
<div class="a t" style="left:1207px;top:353.84px;font-size:12px;color:#a0a0a0;">1</div>
<div class="a t" style="left:1112px;top:463.84px;font-size:12px;">Graph Draw Type:</div>
<div class="a " style="left:1112px;top:481px;width:192px;height:95px;background:#fff;border:1px solid;border-color:#a0a0a0 #fff #fff #a0a0a0;box-shadow:inset 1px 1px 0 #696969, inset -1px -1px 0 #e3e3e3"></div>
<div class="a " style="left:1114px;top:498px;width:172px;height:15px;background:#3399ff"></div>
<div class="a t" style="left:1116px;top:484.84px;font-size:12px;">OHLC Bars</div>
<div class="a t" style="left:1116px;top:499.84px;font-size:12px;color:#fff">Candlestick Bars</div>
<div class="a t" style="left:1116px;top:514.84px;font-size:12px;">Candlestick Body Only</div>
<div class="a t" style="left:1116px;top:529.84px;font-size:12px;">Candlestick Bars Hollow</div>
<div class="a t" style="left:1116px;top:544.84px;font-size:12px;">Line on Close</div>
<div class="a t" style="left:1116px;top:559.84px;font-size:12px;">Mountain</div>
<div class="a " style="left:1286px;top:483px;width:16px;height:91px;background:#f4f4f4"></div>
<div class="a" style="left:1291px;top:489px;width:0;height:0;border-left:3px solid transparent;border-right:3px solid transparent;border-bottom:4px solid #000"></div>
<div class="a " style="left:1287px;top:500px;width:14px;height:17px;background:#f0f0f0;border:1px solid;border-color:#fff #808080 #808080 #fff"><div class="a" style="left:3px;top:4px;width:6px;height:1px;background:#606060;box-shadow:0 2px 0 #606060,0 4px 0 #606060"></div></div>
<div class="a" style="left:1291px;top:566px;width:0;height:0;border-left:3px solid transparent;border-right:3px solid transparent;border-top:4px solid #000"></div>
<div class="a " style="left:1112px;top:585px;width:81px;height:25px;background:#f0f0f0;border:1px solid;border-color:#fff #696969 #696969 #fff;box-shadow:inset -1px -1px 0 #a0a0a0, inset 1px 1px 0 #f0f0f0"></div><div class="a t" style="left:1112px;top:590.84px;font-size:12px;width:81px;text-align:center;">Scale</div>
<div class="a " style="left:1114px;top:621px;width:182px;height:25px;background:#f0f0f0;border:1px solid;border-color:#fff #696969 #696969 #fff;box-shadow:inset -1px -1px 0 #a0a0a0, inset 1px 1px 0 #f0f0f0"></div><div class="a t" style="left:1114px;top:626.84px;font-size:12px;width:182px;text-align:center;">Apply Global Symbol Settings</div>
<div class="a " style="left:1114px;top:653px;width:182px;height:26px;background:#f0f0f0;border:1px solid;border-color:#fff #696969 #696969 #fff;box-shadow:inset -1px -1px 0 #a0a0a0, inset 1px 1px 0 #f0f0f0"></div><div class="a t" style="left:1114px;top:659.34px;font-size:12px;width:182px;text-align:center;">Edit Global Symbol Settings</div>
<div class="a " style="left:572px;top:733px;width:85px;height:26px;background:#f0f0f0;border:1px solid;border-color:#fff #696969 #696969 #fff;box-shadow:inset -1px -1px 0 #a0a0a0, inset 1px 1px 0 #f0f0f0"></div><div class="a t" style="left:572px;top:739.34px;font-size:12px;width:85px;text-align:center;">OK</div>
<div class="a " style="left:664px;top:733px;width:86px;height:26px;background:#f0f0f0;border:1px solid;border-color:#fff #696969 #696969 #fff;box-shadow:inset -1px -1px 0 #a0a0a0, inset 1px 1px 0 #f0f0f0"></div><div class="a t" style="left:664px;top:739.34px;font-size:12px;width:86px;text-align:center;">Cancel</div>
<div class="a " style="left:757px;top:733px;width:86px;height:26px;background:#f0f0f0;border:1px solid;border-color:#fff #696969 #696969 #fff;box-shadow:inset -1px -1px 0 #a0a0a0, inset 1px 1px 0 #f0f0f0"></div><div class="a t" style="left:757px;top:739.34px;font-size:12px;width:86px;text-align:center;">Apply</div>
<div class="a " style="left:850px;top:733px;width:86px;height:26px;background:#f0f0f0;border:1px solid;border-color:#fff #696969 #696969 #fff;box-shadow:inset -1px -1px 0 #a0a0a0, inset 1px 1px 0 #f0f0f0"></div><div class="a t" style="left:850px;top:739.34px;font-size:12px;width:86px;text-align:center;">Help</div>
</body></html>
